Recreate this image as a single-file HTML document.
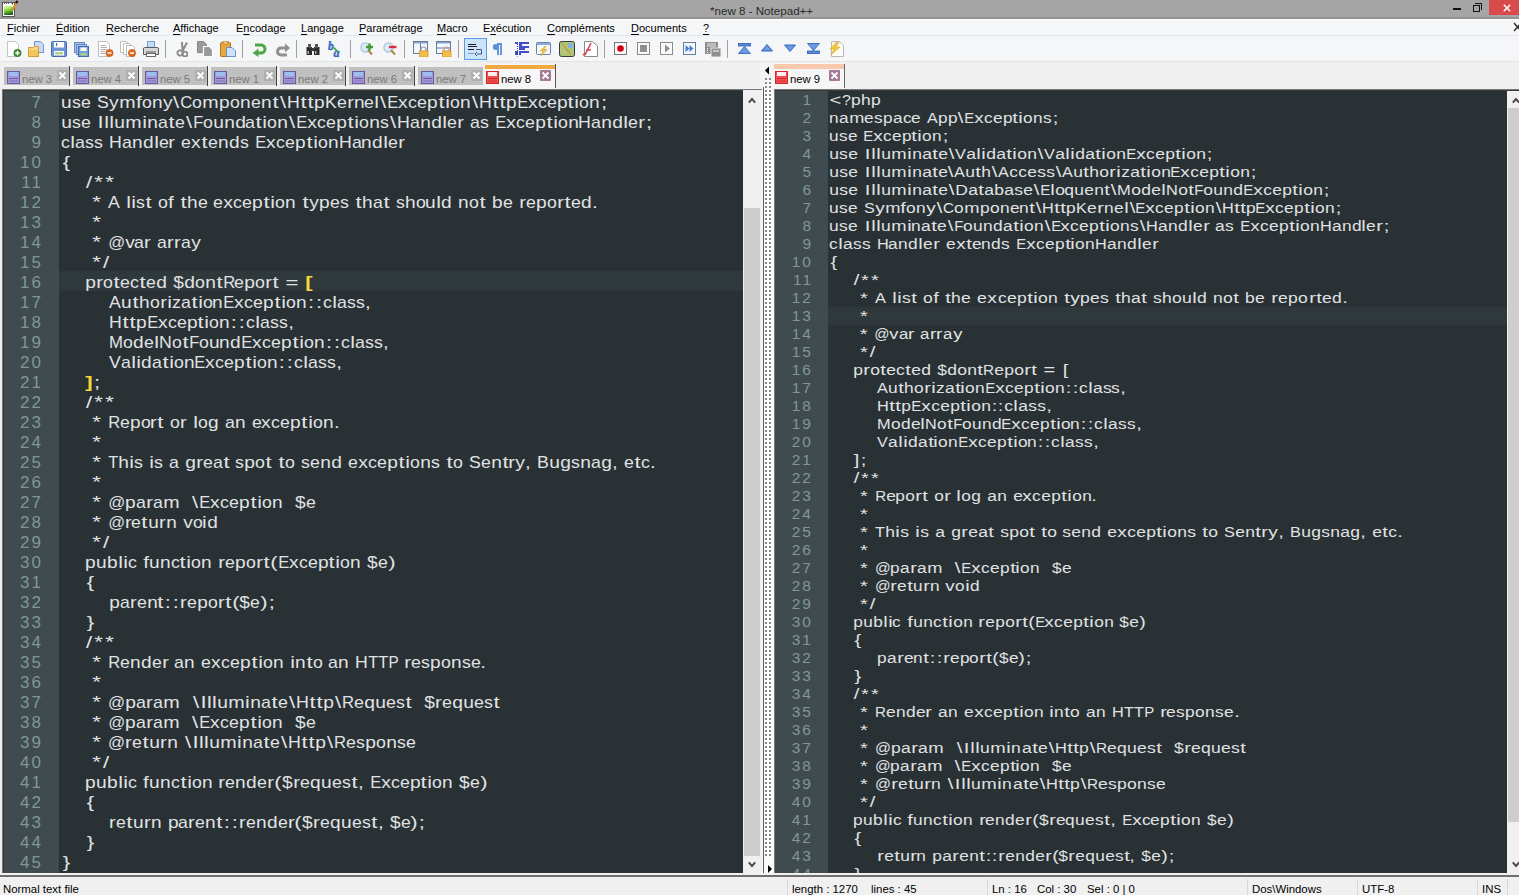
<!DOCTYPE html><html><head><meta charset='utf-8'><style>
*{margin:0;padding:0;box-sizing:border-box}
html,body{width:1519px;height:895px;overflow:hidden;background:#f0f0f0;font-family:"Liberation Sans", sans-serif}
.a{position:absolute}
.ln{position:absolute;white-space:pre;color:#e0e2e4;width:100%}
.ln i{position:absolute;top:0;text-align:center;font-style:normal}
.num{position:absolute;text-align:right;white-space:pre;color:#81969a;letter-spacing:2px}
.mi{position:absolute;top:22px;font-size:11px;color:#000;white-space:pre}
.mi u{text-decoration:underline;text-underline-offset:1.5px;text-decoration-thickness:1px}
.ic{position:absolute;top:41px;width:16px;height:16px}
.sep{position:absolute;top:40px;width:1px;height:18px;background:#a0a0a0}
.tab{position:absolute;top:66px;height:19px;background:#c0c0c0}
.tabt{position:absolute;top:3px;font-size:12.4px;color:#808080;white-space:pre}
.st{position:absolute;top:883.3px;font-size:11.4px;color:#000;white-space:pre}
.ssep{position:absolute;top:879px;width:1px;height:16px;background:#d7d7d7}
</style></head><body><div class="a" style="left:0;top:0;width:1519px;height:19px;background:#a5a5a5"></div><div class="a" style="left:0;top:17px;width:1519px;height:2px;background:#939393"></div><svg class="a" style="left:0;top:0" width="20" height="18" viewBox="0 0 20 18"><defs><linearGradient id="gg" x1="0" y1="0" x2="0.3" y2="1"><stop offset="0" stop-color="#f6ffe0"/><stop offset="0.45" stop-color="#9be040"/><stop offset="1" stop-color="#1e6a18"/></linearGradient></defs><rect x="2.5" y="2.5" width="12" height="14" fill="#fff" stroke="#555" stroke-width="1"/><rect x="4" y="6" width="9" height="9" fill="url(#gg)"/><path d="M4.5 1.5 V4 M6.5 1.5 V4 M8.5 1.5 V4" stroke="#666" stroke-width="1"/><path d="M11 3 L13 3 L13 5 Z" fill="#444"/><path d="M17.2 1.8 L12 10.5" stroke="#d8902a" stroke-width="2.2"/><path d="M17.5 0.8 L16 3.2" stroke="#2a1020" stroke-width="2.4"/></svg><div class="a" style="left:710px;top:3.5px;font-size:11.6px;color:#2a2a2a;white-space:pre">*new 8 - Notepad++</div><div class="a" style="left:1453px;top:8px;width:8px;height:2px;background:#111"></div><div class="a" style="left:1473px;top:5px;width:7px;height:7px;border:1px solid #111"></div><div class="a" style="left:1475px;top:3px;width:7px;height:7px;border-top:1px solid #111;border-right:1px solid #111"></div><div class="a" style="left:1489px;top:0;width:30px;height:15px;background:#d94a4a"></div><svg class="a" style="left:1503px;top:4px" width="8" height="8" viewBox="0 0 8 8"><path d="M0.8 0.8 L7.2 7.2 M7.2 0.8 L0.8 7.2" stroke="#fff" stroke-width="1.5"/></svg><div class="a" style="left:0;top:19px;width:1519px;height:17px;background:#f5f6f7"></div><div class="a" style="left:0;top:19px;width:1519px;height:1px;background:#fdfdfd"></div><div class="a" style="left:0;top:35px;width:1519px;height:1px;background:#e6e7e8"></div><div class="mi" style="left:7px"><u>F</u>ichier</div><div class="mi" style="left:56px"><u>É</u>dition</div><div class="mi" style="left:106px"><u>R</u>echerche</div><div class="mi" style="left:173px"><u>A</u>ffichage</div><div class="mi" style="left:236px">E<u>n</u>codage</div><div class="mi" style="left:301px"><u>L</u>angage</div><div class="mi" style="left:359px"><u>P</u>aramétrage</div><div class="mi" style="left:437px"><u>M</u>acro</div><div class="mi" style="left:483px">E<u>x</u>écution</div><div class="mi" style="left:547px"><u>C</u>ompléments</div><div class="mi" style="left:631px"><u>D</u>ocuments</div><div class="mi" style="left:703px"><u>?</u></div><svg class="a" style="left:1513px;top:22px" width="8" height="10" viewBox="0 0 8 10"><path d="M1 1 L8 9 M8 1 L1 9" stroke="#222" stroke-width="1.3"/></svg><div class="a" style="left:0;top:36px;width:1519px;height:26px;background:#f5f6f7"></div><div class="a" style="left:0;top:61px;width:1519px;height:1px;background:#e3e4e5"></div><svg class="a" style="left:6px;top:41px" width="16" height="16" viewBox="0 0 16 16"><path d="M1.5 0.5 H9.5 L12.5 3.5 V15.5 H1.5 Z" fill="#fff" stroke="#c4c4c4"/><circle cx="11.5" cy="12" r="3.7" fill="#3f8f35" stroke="#2a6a25" stroke-width="0.6"/><path d="M11.5 9.8 V14.2 M9.3 12 H13.7" stroke="#fff" stroke-width="1.3"/></svg><svg class="a" style="left:28px;top:41px" width="16" height="16" viewBox="0 0 16 16"><path d="M6.5 0.5 H12.5 L15.5 3.5 V11.5 H6.5 Z" fill="#c8dcf8" stroke="#7094cc"/><path d="M0.5 6.5 H5 L6 5.5 H10.5 V15.5 H0.5 Z" fill="#f7d77c" stroke="#d09a3a"/><rect x="1" y="9" width="9" height="6" fill="#f3c65a"/></svg><svg class="a" style="left:51px;top:41px" width="16" height="16" viewBox="0 0 16 16"><rect x="0.5" y="0.5" width="15" height="15" rx="1" fill="#7094d4" stroke="#4a6ab0"/><rect x="3" y="1" width="10" height="5.5" fill="#fff"/><rect x="5" y="2" width="1.2" height="3" fill="#4a6ab0"/><rect x="3" y="10" width="10" height="4.5" fill="#fff"/><rect x="4" y="11" width="8" height="2.5" fill="#a8d488"/></svg><svg class="a" style="left:74px;top:41px" width="16" height="16" viewBox="0 0 16 16"><rect x="0.5" y="1.5" width="10" height="10" fill="#a8c0ea" stroke="#6a88c8"/><rect x="2.5" y="3.5" width="10" height="10" fill="#a8c0ea" stroke="#6a88c8"/><rect x="4.5" y="5.5" width="10" height="10" fill="#7c9cd8" stroke="#4a6ab0"/><rect x="6.5" y="6.5" width="6" height="3.5" fill="#fff"/><rect x="6.5" y="12" width="6" height="2.5" fill="#a8d488"/></svg><svg class="a" style="left:98px;top:41px" width="16" height="16" viewBox="0 0 16 16"><path d="M0.5 0.5 H8.5 L11.5 3.5 V15.5 H0.5 Z" fill="#fff" stroke="#bdbdbd"/><path d="M2.5 4.5 H8 M2.5 6.5 H9 M2.5 8.5 H9 M2.5 10.5 H7 M2.5 12.5 H7" stroke="#9a9a9a" stroke-width="0.8"/><circle cx="11.5" cy="12" r="3.6" fill="#e06a1e" stroke="#b04a10" stroke-width="0.6"/><path d="M9.5 12 H13.5" stroke="#fff" stroke-width="1.4"/></svg><svg class="a" style="left:120px;top:41px" width="16" height="16" viewBox="0 0 16 16"><path d="M0.5 0.5 H6.5 L8.5 2.5 V11.5 H0.5 Z" fill="#fff" stroke="#bdbdbd"/><path d="M3.5 2.5 H9.5 L11.5 4.5 V13.5 H3.5 Z" fill="#fff" stroke="#bdbdbd"/><path d="M6.5 4.5 H12.5 L14.5 6.5 V15.5 H6.5 Z" fill="#fff" stroke="#bdbdbd"/><circle cx="12" cy="12" r="3.6" fill="#e06a1e" stroke="#b04a10" stroke-width="0.6"/><path d="M10 12 H14" stroke="#fff" stroke-width="1.4"/></svg><svg class="a" style="left:143px;top:41px" width="16" height="16" viewBox="0 0 16 16"><rect x="4.5" y="0.5" width="7" height="6" fill="#bfdcfa" stroke="#7a9ac8"/><path d="M1.5 6.5 H14.5 Q15.5 6.5 15.5 8 V13.5 H0.5 V8 Q0.5 6.5 1.5 6.5 Z" fill="#d8d8d8" stroke="#5a5a5a"/><rect x="3" y="10" width="10" height="2" fill="#9a9a9a"/><rect x="3.5" y="12.5" width="9" height="3" fill="#fff" stroke="#6a6a6a"/></svg><svg class="a" style="left:176px;top:41px" width="12" height="16" viewBox="0 0 12 16"><path d="M6 1 L6.5 9 M11 1.5 L6.5 10" stroke="#8a8a8a" stroke-width="2"/><circle cx="4" cy="12" r="2.6" fill="none" stroke="#8a8a8a" stroke-width="1.8"/><circle cx="9" cy="13" r="2.4" fill="none" stroke="#8a8a8a" stroke-width="1.8"/></svg><svg class="a" style="left:197px;top:41px" width="16" height="16" viewBox="0 0 16 16"><path d="M0.5 0.5 H6.5 L9.5 3.5 V11.5 H0.5 Z" fill="#9a9a9a" stroke="#888"/><path d="M6.5 5.5 H12.5 L15.5 8.5 V15.5 H6.5 Z" fill="#9a9a9a" stroke="#fff" stroke-width="1.2"/></svg><svg class="a" style="left:220px;top:41px" width="16" height="16" viewBox="0 0 16 16"><rect x="0.5" y="1.5" width="10" height="14" rx="1" fill="#e8a840" stroke="#b07020"/><rect x="3" y="0.5" width="5" height="2.5" fill="#f5d58a" stroke="#b07020" stroke-width="0.6"/><path d="M6.5 6.5 H12 L15.5 10 V15.5 H6.5 Z" fill="#cfe2fb" stroke="#6a90c8"/></svg><svg class="a" style="left:252px;top:42px" width="15" height="15" viewBox="0 0 15 15"><path d="M3 3 H9 A4 4 0 0 1 9 11 H6" fill="none" stroke="#4fa64a" stroke-width="3"/><path d="M0.5 11 L6.5 6.5 V15 Z" fill="#4fa64a"/></svg><svg class="a" style="left:275px;top:42px" width="15" height="15" viewBox="0 0 15 15"><path d="M13 6 H6 A3.5 3.5 0 0 0 6 13 H12" fill="none" stroke="#8f8f8f" stroke-width="3"/><path d="M15 6 L10 1.5 V10.5 Z" fill="#8f8f8f"/></svg><svg class="a" style="left:306px;top:43px" width="14" height="12" viewBox="0 0 14 12"><rect x="0.5" y="4" width="5.5" height="8" fill="#2a2a2a"/><rect x="8" y="4" width="5.5" height="8" fill="#2a2a2a"/><rect x="2" y="1" width="3" height="4" fill="#555"/><rect x="9" y="1" width="3" height="4" fill="#555"/><rect x="5" y="5" width="4" height="3" fill="#3a3a3a"/><rect x="1.5" y="8" width="1.5" height="3" fill="#aaa"/><rect x="9" y="8" width="1.5" height="3" fill="#aaa"/></svg><svg class="a" style="left:328px;top:41px" width="16" height="16" viewBox="0 0 16 16"><text x="0" y="9" font-family="Liberation Serif" font-style="italic" font-weight="bold" font-size="11.5" fill="#3f74d0" stroke="#2a5ab8" stroke-width="0.4">b</text><text x="5.5" y="16" font-family="Liberation Serif" font-style="italic" font-weight="bold" font-size="12" fill="#3f74d0" stroke="#2a5ab8" stroke-width="0.4">a</text><path d="M5.5 6.5 L9.5 10.5" stroke="#4ab04a" stroke-width="1.8"/></svg><svg class="a" style="left:360px;top:42px" width="14" height="14" viewBox="0 0 14 14"><circle cx="5.5" cy="5.5" r="4.6" fill="#dceaf7" stroke="#a8c4dc" stroke-width="1.2"/><path d="M8 8 L12 12.5" stroke="#b08a50" stroke-width="2.2"/><path d="M9.5 1.5 V8.5 M6 5 H13" stroke="#3f9a3a" stroke-width="2.4"/></svg><svg class="a" style="left:383px;top:42px" width="14" height="14" viewBox="0 0 14 14"><circle cx="5.5" cy="5.5" r="4.6" fill="#dceaf7" stroke="#a8c4dc" stroke-width="1.2"/><path d="M8 8 L12 12.5" stroke="#b08a50" stroke-width="2.2"/><path d="M6 5 H13.5" stroke="#d8303a" stroke-width="2.4"/></svg><svg class="a" style="left:413px;top:41px" width="16" height="16" viewBox="0 0 16 16"><rect x="0.5" y="0.5" width="14" height="12" fill="#f0f7ff" stroke="#6a7a95"/><rect x="1" y="1" width="13" height="1.5" fill="#8aa6d0"/><path d="M7.5 2 V12.5" stroke="#6a7a95"/><path d="M8 10 V8.5 A2.5 2.5 0 0 1 13 8.5 V10" fill="none" stroke="#999" stroke-width="1.2"/><rect x="6.5" y="10" width="8.5" height="6" fill="#f2c04a" stroke="#d89a20" stroke-width="0.8"/></svg><svg class="a" style="left:436px;top:41px" width="16" height="16" viewBox="0 0 16 16"><rect x="0.5" y="0.5" width="14" height="12" fill="#f0f7ff" stroke="#6a7a95"/><rect x="1" y="1" width="13" height="1.5" fill="#8aa6d0"/><path d="M1 7 H14" stroke="#6a7a95"/><path d="M8 10 V8.5 A2.5 2.5 0 0 1 13 8.5 V10" fill="none" stroke="#c99" stroke-width="1.2"/><rect x="6.5" y="10" width="8.5" height="6" fill="#f2c04a" stroke="#d89a20" stroke-width="0.8"/></svg><div class="a" style="left:464px;top:38px;width:23px;height:22px;background:#cce4f7;border:1px solid #5a9ae0"></div><svg class="a" style="left:467px;top:42px" width="16" height="16" viewBox="0 0 16 16"><path d="M1 2.5 H9 M1 4.5 H10 M1 7.5 H7" stroke="#1a1a2a" stroke-width="1.2"/><path d="M9 7.5 H14.5 V12 H10" fill="none" stroke="#3a5a90" stroke-width="1"/><path d="M10 10 L8 12 L10 14" fill="none" stroke="#3a5a90"/><path d="M1 11.5 H7" stroke="#7a9ac8" stroke-width="1"/></svg><svg class="a" style="left:492px;top:43px" width="11" height="13" viewBox="0 0 11 13"><path d="M5 1 H10 M6 1 V12 M9 1 V12" stroke="#5a90d8" stroke-width="1.8"/><circle cx="3.8" cy="4" r="3" fill="#5a90d8"/></svg><svg class="a" style="left:515px;top:42px" width="15" height="15" viewBox="0 0 15 15"><path d="M0 1 H3 M4 1 H14 M4 3 H7 M4 5 H14 M4 7 H10 M0 10 H3 M4 10 H14 M0 12 H3 M4 12 H6" stroke="#0a18b8" stroke-width="1.3"/><path d="M2.5 2 V14.5" stroke="#0a18b8" stroke-width="0.8" stroke-dasharray="1 1"/></svg><svg class="a" style="left:536px;top:42px" width="15" height="15" viewBox="0 0 15 15"><rect x="0.5" y="0.5" width="14" height="12" rx="1" fill="#f4f8fc" stroke="#6a80a0"/><rect x="1" y="1" width="13" height="2" fill="#8aaee0"/><path d="M9 4 L4 9 H7 L5 14 L11 7.5 H8 L10 4 Z" fill="#ecc640" stroke="#c8a030" stroke-width="0.5"/></svg><svg class="a" style="left:559px;top:41px" width="16" height="16" viewBox="0 0 16 16"><rect x="0.5" y="0.5" width="15" height="15" rx="2" fill="#a8c878" stroke="#3a3a3a"/><rect x="9" y="2" width="5" height="5" fill="#8ab0e0"/><path d="M3 2 L12 14" stroke="#c8a040" stroke-width="1.5"/><path d="M1 9 Q6 8 8 15" fill="#d8c080" stroke="none" opacity="0.7"/></svg><svg class="a" style="left:582px;top:41px" width="16" height="16" viewBox="0 0 16 16"><path d="M2.5 0.5 H10.5 L15.5 5 V15.5 H2.5 Z" fill="#fff" stroke="#8a8a8a"/><path d="M9 2 L3 14 M1 14 L4 12 M4 9 H9" stroke="#e04050" stroke-width="1.6"/></svg><svg class="a" style="left:614px;top:42px" width="13" height="13" viewBox="0 0 13 13"><rect x="0.5" y="0.5" width="12" height="12" fill="#fafafa" stroke="#777"/><circle cx="6.5" cy="6.5" r="3.3" fill="#d00010"/></svg><svg class="a" style="left:637px;top:42px" width="13" height="13" viewBox="0 0 13 13"><rect x="0.5" y="0.5" width="12" height="12" fill="#fafafa" stroke="#8a8a8a"/><rect x="3" y="3" width="7" height="7" fill="#8f8f8f"/></svg><svg class="a" style="left:660px;top:42px" width="13" height="13" viewBox="0 0 13 13"><rect x="0.5" y="0.5" width="12" height="12" fill="#fafafa" stroke="#8a8a8a"/><path d="M5 2.5 L10 6.5 L5 10.5 Z" fill="#8f8f8f"/></svg><svg class="a" style="left:683px;top:42px" width="13" height="13" viewBox="0 0 13 13"><rect x="0.5" y="0.5" width="12" height="12" fill="#f4f8ff" stroke="#6a7a95"/><path d="M2.5 3 L6.5 6.5 L2.5 10 Z M6.5 3 L10.5 6.5 L6.5 10 Z" fill="#4a7ad8"/></svg><svg class="a" style="left:705px;top:41px" width="16" height="16" viewBox="0 0 16 16"><rect x="0" y="1" width="13" height="12" fill="#8f8f8f"/><path d="M2 3 H11 M2 5 H11" stroke="#fff" stroke-width="0.8"/><path d="M2 7.5 H3 M2 9.5 H3 M2 11.5 H3" stroke="#fff" stroke-width="1"/><rect x="6" y="7" width="10" height="9" fill="#8f8f8f" stroke="#fff" stroke-width="0.8"/><path d="M8 10 H14" stroke="#fff"/></svg><svg class="a" style="left:738px;top:43px" width="13" height="11" viewBox="0 0 13 11"><rect x="0.5" y="0.5" width="12" height="2.5" fill="#5a8ae0" stroke="#2a5ab0" stroke-width="0.8"/><path d="M6.5 3.5 L0.5 10.5 H12.5 Z" fill="#6a9ae6" stroke="#2a5ab0" stroke-width="0.8"/><rect x="0.5" y="10.5" width="12" height="0.1" fill="#2a5ab0"/></svg><svg class="a" style="left:761px;top:44px" width="12" height="8" viewBox="0 0 12 8"><path d="M6 0.5 L0.5 7 H11.5 Z" fill="#6a9ae6" stroke="#2a5ab0" stroke-width="0.9"/></svg><svg class="a" style="left:784px;top:44px" width="12" height="8" viewBox="0 0 12 8"><path d="M6 7.5 L0.5 1 H11.5 Z" fill="#6a9ae6" stroke="#2a5ab0" stroke-width="0.9"/></svg><svg class="a" style="left:807px;top:43px" width="13" height="11" viewBox="0 0 13 11"><path d="M6.5 7.5 L0.5 0.5 H12.5 Z" fill="#6a9ae6" stroke="#2a5ab0" stroke-width="0.8"/><rect x="0.5" y="8" width="12" height="2.5" fill="#5a8ae0" stroke="#2a5ab0" stroke-width="0.8"/></svg><svg class="a" style="left:828px;top:41px" width="16" height="16" viewBox="0 0 16 16"><path d="M3.5 0.5 H11.5 L15.5 4.5 V15.5 H3.5 Z" fill="#fdfdf5" stroke="#b8b8b8"/><path d="M8 1.5 L2 8 H6 L3 14 L12 6 H8 L11 1.5 Z" fill="#f0c838" stroke="#d0a020" stroke-width="0.5"/></svg><div class="sep" style="left:165px"></div><div class="sep" style="left:242px"></div><div class="sep" style="left:296px"></div><div class="sep" style="left:350px"></div><div class="sep" style="left:404px"></div><div class="sep" style="left:458px"></div><div class="sep" style="left:604px"></div><div class="sep" style="left:727px"></div><div class="a" style="left:0;top:62px;width:1519px;height:27px;background:#f0f0f0"></div><div class="a" style="left:4px;top:67px;width:65px;height:18px;background:#c0c0c0"></div><div class="a" style="left:69px;top:66px;width:1px;height:20px;background:#444"></div><svg class="a" style="left:7px;top:71px" width="13" height="13" viewBox="0 0 13 13"><rect x="0.5" y="0.5" width="12" height="12" fill="#a596d8" stroke="#6a5aa0"/><rect x="2" y="1" width="9" height="4" fill="#9ac0f0"/><rect x="2" y="7" width="9" height="1" fill="#6a5aa0"/><rect x="2" y="9.5" width="9" height="1" fill="#6a5aa0" opacity="0.6"/></svg><div class="a" style="left:22px;top:73px;font-size:11.3px;color:#7a7a7a;white-space:pre">new 3</div><svg class="a" style="left:57px;top:70px" width="11" height="11" viewBox="0 0 11 11"><rect x="0" y="0" width="11" height="11" rx="1" fill="#b0b0b0"/><path d="M2.5 2.5 L8.5 8.5 M8.5 2.5 L2.5 8.5" stroke="#fff" stroke-width="1.8"/></svg><div class="a" style="left:73px;top:67px;width:65px;height:18px;background:#c0c0c0"></div><div class="a" style="left:138px;top:66px;width:1px;height:20px;background:#444"></div><svg class="a" style="left:76px;top:71px" width="13" height="13" viewBox="0 0 13 13"><rect x="0.5" y="0.5" width="12" height="12" fill="#a596d8" stroke="#6a5aa0"/><rect x="2" y="1" width="9" height="4" fill="#9ac0f0"/><rect x="2" y="7" width="9" height="1" fill="#6a5aa0"/><rect x="2" y="9.5" width="9" height="1" fill="#6a5aa0" opacity="0.6"/></svg><div class="a" style="left:91px;top:73px;font-size:11.3px;color:#7a7a7a;white-space:pre">new 4</div><svg class="a" style="left:126px;top:70px" width="11" height="11" viewBox="0 0 11 11"><rect x="0" y="0" width="11" height="11" rx="1" fill="#b0b0b0"/><path d="M2.5 2.5 L8.5 8.5 M8.5 2.5 L2.5 8.5" stroke="#fff" stroke-width="1.8"/></svg><div class="a" style="left:142px;top:67px;width:65px;height:18px;background:#c0c0c0"></div><div class="a" style="left:207px;top:66px;width:1px;height:20px;background:#444"></div><svg class="a" style="left:145px;top:71px" width="13" height="13" viewBox="0 0 13 13"><rect x="0.5" y="0.5" width="12" height="12" fill="#a596d8" stroke="#6a5aa0"/><rect x="2" y="1" width="9" height="4" fill="#9ac0f0"/><rect x="2" y="7" width="9" height="1" fill="#6a5aa0"/><rect x="2" y="9.5" width="9" height="1" fill="#6a5aa0" opacity="0.6"/></svg><div class="a" style="left:160px;top:73px;font-size:11.3px;color:#7a7a7a;white-space:pre">new 5</div><svg class="a" style="left:195px;top:70px" width="11" height="11" viewBox="0 0 11 11"><rect x="0" y="0" width="11" height="11" rx="1" fill="#b0b0b0"/><path d="M2.5 2.5 L8.5 8.5 M8.5 2.5 L2.5 8.5" stroke="#fff" stroke-width="1.8"/></svg><div class="a" style="left:211px;top:67px;width:65px;height:18px;background:#c0c0c0"></div><div class="a" style="left:276px;top:66px;width:1px;height:20px;background:#444"></div><svg class="a" style="left:214px;top:71px" width="13" height="13" viewBox="0 0 13 13"><rect x="0.5" y="0.5" width="12" height="12" fill="#a596d8" stroke="#6a5aa0"/><rect x="2" y="1" width="9" height="4" fill="#9ac0f0"/><rect x="2" y="7" width="9" height="1" fill="#6a5aa0"/><rect x="2" y="9.5" width="9" height="1" fill="#6a5aa0" opacity="0.6"/></svg><div class="a" style="left:229px;top:73px;font-size:11.3px;color:#7a7a7a;white-space:pre">new 1</div><svg class="a" style="left:264px;top:70px" width="11" height="11" viewBox="0 0 11 11"><rect x="0" y="0" width="11" height="11" rx="1" fill="#b0b0b0"/><path d="M2.5 2.5 L8.5 8.5 M8.5 2.5 L2.5 8.5" stroke="#fff" stroke-width="1.8"/></svg><div class="a" style="left:280px;top:67px;width:65px;height:18px;background:#c0c0c0"></div><div class="a" style="left:345px;top:66px;width:1px;height:20px;background:#444"></div><svg class="a" style="left:283px;top:71px" width="13" height="13" viewBox="0 0 13 13"><rect x="0.5" y="0.5" width="12" height="12" fill="#a596d8" stroke="#6a5aa0"/><rect x="2" y="1" width="9" height="4" fill="#9ac0f0"/><rect x="2" y="7" width="9" height="1" fill="#6a5aa0"/><rect x="2" y="9.5" width="9" height="1" fill="#6a5aa0" opacity="0.6"/></svg><div class="a" style="left:298px;top:73px;font-size:11.3px;color:#7a7a7a;white-space:pre">new 2</div><svg class="a" style="left:333px;top:70px" width="11" height="11" viewBox="0 0 11 11"><rect x="0" y="0" width="11" height="11" rx="1" fill="#b0b0b0"/><path d="M2.5 2.5 L8.5 8.5 M8.5 2.5 L2.5 8.5" stroke="#fff" stroke-width="1.8"/></svg><div class="a" style="left:349px;top:67px;width:65px;height:18px;background:#c0c0c0"></div><div class="a" style="left:414px;top:66px;width:1px;height:20px;background:#444"></div><svg class="a" style="left:352px;top:71px" width="13" height="13" viewBox="0 0 13 13"><rect x="0.5" y="0.5" width="12" height="12" fill="#a596d8" stroke="#6a5aa0"/><rect x="2" y="1" width="9" height="4" fill="#9ac0f0"/><rect x="2" y="7" width="9" height="1" fill="#6a5aa0"/><rect x="2" y="9.5" width="9" height="1" fill="#6a5aa0" opacity="0.6"/></svg><div class="a" style="left:367px;top:73px;font-size:11.3px;color:#7a7a7a;white-space:pre">new 6</div><svg class="a" style="left:402px;top:70px" width="11" height="11" viewBox="0 0 11 11"><rect x="0" y="0" width="11" height="11" rx="1" fill="#b0b0b0"/><path d="M2.5 2.5 L8.5 8.5 M8.5 2.5 L2.5 8.5" stroke="#fff" stroke-width="1.8"/></svg><div class="a" style="left:418px;top:67px;width:65px;height:18px;background:#c0c0c0"></div><svg class="a" style="left:421px;top:71px" width="13" height="13" viewBox="0 0 13 13"><rect x="0.5" y="0.5" width="12" height="12" fill="#a596d8" stroke="#6a5aa0"/><rect x="2" y="1" width="9" height="4" fill="#9ac0f0"/><rect x="2" y="7" width="9" height="1" fill="#6a5aa0"/><rect x="2" y="9.5" width="9" height="1" fill="#6a5aa0" opacity="0.6"/></svg><div class="a" style="left:436px;top:73px;font-size:11.3px;color:#7a7a7a;white-space:pre">new 7</div><svg class="a" style="left:471px;top:70px" width="11" height="11" viewBox="0 0 11 11"><rect x="0" y="0" width="11" height="11" rx="1" fill="#b0b0b0"/><path d="M2.5 2.5 L8.5 8.5 M8.5 2.5 L2.5 8.5" stroke="#fff" stroke-width="1.8"/></svg><div class="a" style="left:485px;top:64px;width:70px;height:25px;background:#f6f6f6"></div><div class="a" style="left:485px;top:65px;width:70px;height:4px;background:#f0a840"></div><div class="a" style="left:555px;top:64px;width:1px;height:24px;background:#555"></div><svg class="a" style="left:486px;top:71px" width="13" height="13" viewBox="0 0 13 13"><rect x="0.5" y="0.5" width="12" height="12" fill="#f05050" stroke="#d02828"/><rect x="2" y="1" width="9" height="4" fill="#fff0f0"/><rect x="2" y="7" width="9" height="1" fill="#d02828"/><rect x="2" y="9.5" width="9" height="1" fill="#d02828" opacity="0.6"/></svg><div class="a" style="left:501px;top:72.5px;font-size:11.3px;color:#000;white-space:pre">new 8</div><svg class="a" style="left:540px;top:70px" width="11" height="11" viewBox="0 0 11 11"><rect x="0" y="0" width="11" height="11" rx="1" fill="#a57a95"/><path d="M2.5 2.5 L8.5 8.5 M8.5 2.5 L2.5 8.5" stroke="#fff" stroke-width="1.8"/></svg><div class="a" style="left:774px;top:63px;width:70px;height:26px;background:#f6f6f6"></div><div class="a" style="left:774px;top:64px;width:70px;height:5px;background:#fac8ad"></div><div class="a" style="left:844px;top:64px;width:1px;height:24px;background:#666"></div><svg class="a" style="left:775px;top:71px" width="13" height="13" viewBox="0 0 13 13"><rect x="0.5" y="0.5" width="12" height="12" fill="#f05050" stroke="#d02828"/><rect x="2" y="1" width="9" height="4" fill="#fff0f0"/><rect x="2" y="7" width="9" height="1" fill="#d02828"/><rect x="2" y="9.5" width="9" height="1" fill="#d02828" opacity="0.6"/></svg><div class="a" style="left:790px;top:72.5px;font-size:11.3px;color:#000;white-space:pre">new 9</div><svg class="a" style="left:829px;top:70px" width="11" height="11" viewBox="0 0 11 11"><rect x="0" y="0" width="11" height="11" rx="1" fill="#a57a95"/><path d="M2.5 2.5 L8.5 8.5 M8.5 2.5 L2.5 8.5" stroke="#fff" stroke-width="1.8"/></svg><div class="a" style="left:2px;top:89px;width:761px;height:1px;background:#787878"></div><div class="a" style="left:2px;top:89px;width:1px;height:784px;background:#787878"></div><div class="a" style="left:3px;top:90px;width:740px;height:1px;background:#353b3d"></div><div class="a" style="left:3px;top:90px;width:1px;height:783px;background:#353b3d"></div><div class="a" style="left:760px;top:63px;width:14px;height:24px;background:#f4f4f4"></div><div class="a" style="left:762px;top:87px;width:12px;height:788px;background:#fbfbfb"></div><div class="a" style="left:763px;top:87px;width:1px;height:788px;background:#5c5c5c"></div><div class="a" style="left:774px;top:89px;width:745px;height:1px;background:#787878"></div><div class="a" style="left:774px;top:89px;width:1px;height:784px;background:#787878"></div><div class="a" style="left:775px;top:90px;width:744px;height:1px;background:#353b3d"></div><div class="a" style="left:765px;top:78px;width:6px;height:780px;background-image:linear-gradient(transparent 2px, #fbfbfb 2px),linear-gradient(90deg,#8a8a8a 2px, transparent 2px);background-size:4px 4px,4px 4px"></div><svg class="a" style="left:764px;top:66px" width="6" height="9" viewBox="0 0 6 9"><path d="M5 0.5 L1 4.5 L5 8.5 Z" fill="#000"/></svg><svg class="a" style="left:767px;top:864px" width="6" height="10" viewBox="0 0 6 10"><path d="M1 1 L5 5 L1 9 Z" fill="#000"/></svg><div class="a" style="left:4px;top:91px;width:739px;height:782px;background:#293134;overflow:hidden"><div class="a" style="left:0;top:0;width:55px;height:782px;background:#3f4b4e"></div><div class="a" style="left:55px;top:180px;width:739px;height:20px;background:#2f393c"></div><div class="num" style="left:0;width:39px;top:2px;font-size:17px;line-height:20px">7</div><div class="ln" style="left:0;top:2px;font-size:17px;line-height:20px"><i style="left:57.0px;width:10.9px;transform:scaleX(1.126)">u</i><i style="left:67.9px;width:9.0px;transform:scaleX(1.043)">s</i><i style="left:76.9px;width:9.9px;transform:scaleX(1.042)">e</i><i style="left:92.8px;width:11.9px;transform:scaleX(1.042)">S</i><i style="left:104.8px;width:9.9px;transform:scaleX(1.136)">y</i><i style="left:114.7px;width:16.9px;transform:scaleX(1.155)">m</i><i style="left:131.6px;width:6.0px;transform:scaleX(1.211)">f</i><i style="left:137.6px;width:9.9px;transform:scaleX(1.042)">o</i><i style="left:147.5px;width:10.9px;transform:scaleX(1.126)">n</i><i style="left:158.5px;width:9.9px;transform:scaleX(1.136)">y</i><i style="left:168.4px;width:8.0px;transform:scaleX(1.300)">\</i><i style="left:176.4px;width:11.9px;transform:scaleX(0.978)">C</i><i style="left:188.3px;width:9.9px;transform:scaleX(1.042)">o</i><i style="left:198.3px;width:16.9px;transform:scaleX(1.155)">m</i><i style="left:215.2px;width:10.9px;transform:scaleX(1.126)">p</i><i style="left:226.1px;width:9.9px;transform:scaleX(1.042)">o</i><i style="left:236.1px;width:10.9px;transform:scaleX(1.126)">n</i><i style="left:247.0px;width:9.9px;transform:scaleX(1.042)">e</i><i style="left:257.0px;width:10.9px;transform:scaleX(1.126)">n</i><i style="left:267.9px;width:7.0px;transform:scaleX(1.300)">t</i><i style="left:274.9px;width:8.0px;transform:scaleX(1.300)">\</i><i style="left:282.8px;width:12.9px;transform:scaleX(1.043)">H</i><i style="left:295.8px;width:7.0px;transform:scaleX(1.300)">t</i><i style="left:302.7px;width:7.0px;transform:scaleX(1.300)">t</i><i style="left:309.7px;width:10.9px;transform:scaleX(1.126)">p</i><i style="left:320.7px;width:11.9px;transform:scaleX(1.042)">K</i><i style="left:332.6px;width:9.9px;transform:scaleX(1.042)">e</i><i style="left:342.5px;width:7.0px;transform:scaleX(1.184)">r</i><i style="left:349.5px;width:10.9px;transform:scaleX(1.126)">n</i><i style="left:360.4px;width:9.9px;transform:scaleX(1.042)">e</i><i style="left:370.4px;width:5.0px;transform:scaleX(1.254)">l</i><i style="left:375.4px;width:8.0px;transform:scaleX(1.300)">\</i><i style="left:383.3px;width:10.9px;transform:scaleX(0.972)">E</i><i style="left:394.3px;width:9.9px;transform:scaleX(1.136)">x</i><i style="left:404.2px;width:9.0px;transform:scaleX(1.043)">c</i><i style="left:413.2px;width:9.9px;transform:scaleX(1.042)">e</i><i style="left:423.1px;width:10.9px;transform:scaleX(1.126)">p</i><i style="left:434.1px;width:7.0px;transform:scaleX(1.300)">t</i><i style="left:441.0px;width:5.0px;transform:scaleX(1.254)">i</i><i style="left:446.0px;width:9.9px;transform:scaleX(1.042)">o</i><i style="left:456.0px;width:10.9px;transform:scaleX(1.126)">n</i><i style="left:466.9px;width:8.0px;transform:scaleX(1.300)">\</i><i style="left:474.9px;width:12.9px;transform:scaleX(1.043)">H</i><i style="left:487.8px;width:7.0px;transform:scaleX(1.300)">t</i><i style="left:494.8px;width:7.0px;transform:scaleX(1.300)">t</i><i style="left:501.7px;width:10.9px;transform:scaleX(1.126)">p</i><i style="left:512.7px;width:10.9px;transform:scaleX(0.972)">E</i><i style="left:523.6px;width:9.9px;transform:scaleX(1.136)">x</i><i style="left:533.6px;width:9.0px;transform:scaleX(1.043)">c</i><i style="left:542.5px;width:9.9px;transform:scaleX(1.042)">e</i><i style="left:552.5px;width:10.9px;transform:scaleX(1.126)">p</i><i style="left:563.4px;width:7.0px;transform:scaleX(1.300)">t</i><i style="left:570.4px;width:5.0px;transform:scaleX(1.254)">i</i><i style="left:575.3px;width:9.9px;transform:scaleX(1.042)">o</i><i style="left:585.3px;width:10.9px;transform:scaleX(1.126)">n</i><i style="left:596.2px;width:8.0px;transform:scaleX(1.300)">;</i></div><div class="num" style="left:0;width:39px;top:22px;font-size:17px;line-height:20px">8</div><div class="ln" style="left:0;top:22px;font-size:17px;line-height:20px"><i style="left:57.0px;width:11.0px;transform:scaleX(1.128)">u</i><i style="left:68.0px;width:9.0px;transform:scaleX(1.044)">s</i><i style="left:76.9px;width:10.0px;transform:scaleX(1.044)">e</i><i style="left:92.9px;width:7.0px;transform:scaleX(1.300)">I</i><i style="left:99.9px;width:5.0px;transform:scaleX(1.256)">l</i><i style="left:104.9px;width:5.0px;transform:scaleX(1.256)">l</i><i style="left:109.8px;width:11.0px;transform:scaleX(1.128)">u</i><i style="left:120.8px;width:16.9px;transform:scaleX(1.157)">m</i><i style="left:137.8px;width:5.0px;transform:scaleX(1.256)">i</i><i style="left:142.7px;width:11.0px;transform:scaleX(1.128)">n</i><i style="left:153.7px;width:10.0px;transform:scaleX(1.044)">a</i><i style="left:163.7px;width:7.0px;transform:scaleX(1.300)">t</i><i style="left:170.7px;width:10.0px;transform:scaleX(1.044)">e</i><i style="left:180.6px;width:8.0px;transform:scaleX(1.300)">\</i><i style="left:188.6px;width:10.0px;transform:scaleX(0.968)">F</i><i style="left:198.6px;width:10.0px;transform:scaleX(1.044)">o</i><i style="left:208.5px;width:11.0px;transform:scaleX(1.128)">u</i><i style="left:219.5px;width:11.0px;transform:scaleX(1.128)">n</i><i style="left:230.5px;width:11.0px;transform:scaleX(1.128)">d</i><i style="left:241.4px;width:10.0px;transform:scaleX(1.044)">a</i><i style="left:251.4px;width:7.0px;transform:scaleX(1.300)">t</i><i style="left:258.4px;width:5.0px;transform:scaleX(1.256)">i</i><i style="left:263.4px;width:10.0px;transform:scaleX(1.044)">o</i><i style="left:273.3px;width:11.0px;transform:scaleX(1.128)">n</i><i style="left:284.3px;width:8.0px;transform:scaleX(1.300)">\</i><i style="left:292.3px;width:11.0px;transform:scaleX(0.974)">E</i><i style="left:303.3px;width:10.0px;transform:scaleX(1.138)">x</i><i style="left:313.2px;width:9.0px;transform:scaleX(1.044)">c</i><i style="left:322.2px;width:10.0px;transform:scaleX(1.044)">e</i><i style="left:332.2px;width:11.0px;transform:scaleX(1.128)">p</i><i style="left:343.1px;width:7.0px;transform:scaleX(1.300)">t</i><i style="left:350.1px;width:5.0px;transform:scaleX(1.256)">i</i><i style="left:355.1px;width:10.0px;transform:scaleX(1.044)">o</i><i style="left:365.1px;width:11.0px;transform:scaleX(1.128)">n</i><i style="left:376.0px;width:9.0px;transform:scaleX(1.044)">s</i><i style="left:385.0px;width:8.0px;transform:scaleX(1.300)">\</i><i style="left:393.0px;width:13.0px;transform:scaleX(1.045)">H</i><i style="left:405.9px;width:10.0px;transform:scaleX(1.044)">a</i><i style="left:415.9px;width:11.0px;transform:scaleX(1.128)">n</i><i style="left:426.9px;width:11.0px;transform:scaleX(1.128)">d</i><i style="left:437.8px;width:5.0px;transform:scaleX(1.256)">l</i><i style="left:442.8px;width:10.0px;transform:scaleX(1.044)">e</i><i style="left:452.8px;width:7.0px;transform:scaleX(1.186)">r</i><i style="left:465.8px;width:10.0px;transform:scaleX(1.044)">a</i><i style="left:475.7px;width:9.0px;transform:scaleX(1.044)">s</i><i style="left:490.7px;width:11.0px;transform:scaleX(0.974)">E</i><i style="left:501.6px;width:10.0px;transform:scaleX(1.138)">x</i><i style="left:511.6px;width:9.0px;transform:scaleX(1.044)">c</i><i style="left:520.6px;width:10.0px;transform:scaleX(1.044)">e</i><i style="left:530.6px;width:11.0px;transform:scaleX(1.128)">p</i><i style="left:541.5px;width:7.0px;transform:scaleX(1.300)">t</i><i style="left:548.5px;width:5.0px;transform:scaleX(1.256)">i</i><i style="left:553.5px;width:10.0px;transform:scaleX(1.044)">o</i><i style="left:563.5px;width:11.0px;transform:scaleX(1.128)">n</i><i style="left:574.4px;width:13.0px;transform:scaleX(1.045)">H</i><i style="left:587.4px;width:10.0px;transform:scaleX(1.044)">a</i><i style="left:597.4px;width:11.0px;transform:scaleX(1.128)">n</i><i style="left:608.3px;width:11.0px;transform:scaleX(1.128)">d</i><i style="left:619.3px;width:5.0px;transform:scaleX(1.256)">l</i><i style="left:624.3px;width:10.0px;transform:scaleX(1.044)">e</i><i style="left:634.2px;width:7.0px;transform:scaleX(1.186)">r</i><i style="left:641.2px;width:8.0px;transform:scaleX(1.300)">;</i></div><div class="num" style="left:0;width:39px;top:42px;font-size:17px;line-height:20px">9</div><div class="ln" style="left:0;top:42px;font-size:17px;line-height:20px"><i style="left:57.0px;width:9.0px;transform:scaleX(1.043)">c</i><i style="left:66.0px;width:5.0px;transform:scaleX(1.254)">l</i><i style="left:70.9px;width:9.9px;transform:scaleX(1.042)">a</i><i style="left:80.9px;width:9.0px;transform:scaleX(1.043)">s</i><i style="left:89.8px;width:9.0px;transform:scaleX(1.043)">s</i><i style="left:104.8px;width:12.9px;transform:scaleX(1.043)">H</i><i style="left:117.7px;width:9.9px;transform:scaleX(1.042)">a</i><i style="left:127.6px;width:10.9px;transform:scaleX(1.126)">n</i><i style="left:138.6px;width:10.9px;transform:scaleX(1.126)">d</i><i style="left:149.5px;width:5.0px;transform:scaleX(1.254)">l</i><i style="left:154.5px;width:9.9px;transform:scaleX(1.042)">e</i><i style="left:164.4px;width:7.0px;transform:scaleX(1.184)">r</i><i style="left:177.4px;width:9.9px;transform:scaleX(1.042)">e</i><i style="left:187.3px;width:9.9px;transform:scaleX(1.136)">x</i><i style="left:197.3px;width:7.0px;transform:scaleX(1.300)">t</i><i style="left:204.2px;width:9.9px;transform:scaleX(1.042)">e</i><i style="left:214.2px;width:10.9px;transform:scaleX(1.126)">n</i><i style="left:225.1px;width:10.9px;transform:scaleX(1.126)">d</i><i style="left:236.1px;width:9.0px;transform:scaleX(1.043)">s</i><i style="left:251.0px;width:10.9px;transform:scaleX(0.972)">E</i><i style="left:261.9px;width:9.9px;transform:scaleX(1.136)">x</i><i style="left:271.9px;width:9.0px;transform:scaleX(1.043)">c</i><i style="left:280.8px;width:9.9px;transform:scaleX(1.042)">e</i><i style="left:290.8px;width:10.9px;transform:scaleX(1.126)">p</i><i style="left:301.7px;width:7.0px;transform:scaleX(1.300)">t</i><i style="left:308.7px;width:5.0px;transform:scaleX(1.254)">i</i><i style="left:313.7px;width:9.9px;transform:scaleX(1.042)">o</i><i style="left:323.6px;width:10.9px;transform:scaleX(1.126)">n</i><i style="left:334.5px;width:12.9px;transform:scaleX(1.043)">H</i><i style="left:347.5px;width:9.9px;transform:scaleX(1.042)">a</i><i style="left:357.4px;width:10.9px;transform:scaleX(1.126)">n</i><i style="left:368.4px;width:10.9px;transform:scaleX(1.126)">d</i><i style="left:379.3px;width:5.0px;transform:scaleX(1.254)">l</i><i style="left:384.3px;width:9.9px;transform:scaleX(1.042)">e</i><i style="left:394.2px;width:7.0px;transform:scaleX(1.184)">r</i></div><div class="num" style="left:0;width:39px;top:62px;font-size:17px;line-height:20px">10</div><div class="ln" style="left:0;top:62px;font-size:17px;line-height:20px"><i style="left:57.0px;width:11.0px;transform:scaleX(1.300)">{</i></div><div class="num" style="left:0;width:39px;top:82px;font-size:17px;line-height:20px">11</div><div class="ln" style="left:0;top:82px;font-size:17px;line-height:20px"><i style="left:81.0px;width:8.0px;transform:scaleX(1.300)">/</i><i style="left:89.0px;width:11.0px;transform:scaleX(1.300)">*</i><i style="left:100.0px;width:11.0px;transform:scaleX(1.300)">*</i></div><div class="num" style="left:0;width:39px;top:102px;font-size:17px;line-height:20px">12</div><div class="ln" style="left:0;top:102px;font-size:17px;line-height:20px"><i style="left:87.0px;width:10.9px;transform:scaleX(1.300)">*</i><i style="left:103.9px;width:11.9px;transform:scaleX(1.043)">A</i><i style="left:121.8px;width:5.0px;transform:scaleX(1.254)">l</i><i style="left:126.8px;width:5.0px;transform:scaleX(1.254)">i</i><i style="left:131.8px;width:9.0px;transform:scaleX(1.043)">s</i><i style="left:140.7px;width:7.0px;transform:scaleX(1.300)">t</i><i style="left:153.7px;width:10.0px;transform:scaleX(1.042)">o</i><i style="left:163.6px;width:6.0px;transform:scaleX(1.212)">f</i><i style="left:175.6px;width:7.0px;transform:scaleX(1.300)">t</i><i style="left:182.5px;width:10.9px;transform:scaleX(1.126)">h</i><i style="left:193.5px;width:10.0px;transform:scaleX(1.042)">e</i><i style="left:209.4px;width:10.0px;transform:scaleX(1.042)">e</i><i style="left:219.4px;width:10.0px;transform:scaleX(1.137)">x</i><i style="left:229.3px;width:9.0px;transform:scaleX(1.043)">c</i><i style="left:238.3px;width:10.0px;transform:scaleX(1.042)">e</i><i style="left:248.2px;width:10.9px;transform:scaleX(1.126)">p</i><i style="left:259.2px;width:7.0px;transform:scaleX(1.300)">t</i><i style="left:266.1px;width:5.0px;transform:scaleX(1.254)">i</i><i style="left:271.1px;width:10.0px;transform:scaleX(1.042)">o</i><i style="left:281.1px;width:10.9px;transform:scaleX(1.126)">n</i><i style="left:298.0px;width:7.0px;transform:scaleX(1.300)">t</i><i style="left:305.0px;width:10.0px;transform:scaleX(1.137)">y</i><i style="left:314.9px;width:10.9px;transform:scaleX(1.126)">p</i><i style="left:325.9px;width:10.0px;transform:scaleX(1.042)">e</i><i style="left:335.8px;width:9.0px;transform:scaleX(1.043)">s</i><i style="left:350.7px;width:7.0px;transform:scaleX(1.300)">t</i><i style="left:357.7px;width:10.9px;transform:scaleX(1.126)">h</i><i style="left:368.7px;width:10.0px;transform:scaleX(1.042)">a</i><i style="left:378.6px;width:7.0px;transform:scaleX(1.300)">t</i><i style="left:391.5px;width:9.0px;transform:scaleX(1.043)">s</i><i style="left:400.5px;width:10.9px;transform:scaleX(1.126)">h</i><i style="left:411.5px;width:10.0px;transform:scaleX(1.042)">o</i><i style="left:421.4px;width:10.9px;transform:scaleX(1.126)">u</i><i style="left:432.4px;width:5.0px;transform:scaleX(1.254)">l</i><i style="left:437.3px;width:10.9px;transform:scaleX(1.126)">d</i><i style="left:454.3px;width:10.9px;transform:scaleX(1.126)">n</i><i style="left:465.2px;width:10.0px;transform:scaleX(1.042)">o</i><i style="left:475.2px;width:7.0px;transform:scaleX(1.300)">t</i><i style="left:488.1px;width:10.9px;transform:scaleX(1.126)">b</i><i style="left:499.0px;width:10.0px;transform:scaleX(1.042)">e</i><i style="left:515.0px;width:7.0px;transform:scaleX(1.185)">r</i><i style="left:521.9px;width:10.0px;transform:scaleX(1.042)">e</i><i style="left:531.9px;width:10.9px;transform:scaleX(1.126)">p</i><i style="left:542.8px;width:10.0px;transform:scaleX(1.042)">o</i><i style="left:552.8px;width:7.0px;transform:scaleX(1.185)">r</i><i style="left:559.8px;width:7.0px;transform:scaleX(1.300)">t</i><i style="left:566.7px;width:10.0px;transform:scaleX(1.042)">e</i><i style="left:576.7px;width:10.9px;transform:scaleX(1.126)">d</i><i style="left:587.6px;width:6.0px;transform:scaleX(1.212)">.</i></div><div class="num" style="left:0;width:39px;top:122px;font-size:17px;line-height:20px">13</div><div class="ln" style="left:0;top:122px;font-size:17px;line-height:20px"><i style="left:87.0px;width:11.0px;transform:scaleX(1.300)">*</i></div><div class="num" style="left:0;width:39px;top:142px;font-size:17px;line-height:20px">14</div><div class="ln" style="left:0;top:142px;font-size:17px;line-height:20px"><i style="left:86.9px;width:10.9px;transform:scaleX(1.300)">*</i><i style="left:103.7px;width:16.8px;transform:scaleX(0.978)">@</i><i style="left:120.5px;width:9.9px;transform:scaleX(1.129)">v</i><i style="left:130.4px;width:9.9px;transform:scaleX(1.035)">a</i><i style="left:140.2px;width:6.9px;transform:scaleX(1.176)">r</i><i style="left:153.1px;width:9.9px;transform:scaleX(1.035)">a</i><i style="left:162.9px;width:6.9px;transform:scaleX(1.176)">r</i><i style="left:169.8px;width:6.9px;transform:scaleX(1.176)">r</i><i style="left:176.8px;width:9.9px;transform:scaleX(1.035)">a</i><i style="left:186.6px;width:9.9px;transform:scaleX(1.129)">y</i></div><div class="num" style="left:0;width:39px;top:162px;font-size:17px;line-height:20px">15</div><div class="ln" style="left:0;top:162px;font-size:17px;line-height:20px"><i style="left:87.0px;width:11.0px;transform:scaleX(1.300)">*</i><i style="left:98.0px;width:8.0px;transform:scaleX(1.300)">/</i></div><div class="num" style="left:0;width:39px;top:182px;font-size:17px;line-height:20px">16</div><div class="ln" style="left:0;top:182px;font-size:17px;line-height:20px"><i style="left:81.0px;width:11.0px;transform:scaleX(1.127)">p</i><i style="left:92.0px;width:7.0px;transform:scaleX(1.185)">r</i><i style="left:98.9px;width:10.0px;transform:scaleX(1.043)">o</i><i style="left:108.9px;width:7.0px;transform:scaleX(1.300)">t</i><i style="left:115.9px;width:10.0px;transform:scaleX(1.043)">e</i><i style="left:125.8px;width:9.0px;transform:scaleX(1.044)">c</i><i style="left:134.8px;width:7.0px;transform:scaleX(1.300)">t</i><i style="left:141.8px;width:10.0px;transform:scaleX(1.043)">e</i><i style="left:151.7px;width:11.0px;transform:scaleX(1.127)">d</i><i style="left:168.7px;width:11.0px;transform:scaleX(1.127)">$</i><i style="left:179.6px;width:11.0px;transform:scaleX(1.127)">d</i><i style="left:190.6px;width:10.0px;transform:scaleX(1.043)">o</i><i style="left:200.5px;width:11.0px;transform:scaleX(1.127)">n</i><i style="left:211.5px;width:7.0px;transform:scaleX(1.300)">t</i><i style="left:218.5px;width:12.0px;transform:scaleX(0.979)">R</i><i style="left:230.4px;width:10.0px;transform:scaleX(1.043)">e</i><i style="left:240.4px;width:11.0px;transform:scaleX(1.127)">p</i><i style="left:251.3px;width:10.0px;transform:scaleX(1.043)">o</i><i style="left:261.3px;width:7.0px;transform:scaleX(1.185)">r</i><i style="left:268.3px;width:7.0px;transform:scaleX(1.300)">t</i><i style="left:281.2px;width:13.9px;transform:scaleX(1.300)">=</i><i style="left:301.1px;width:8.0px;transform:scaleX(1.300);color:#f8d838;font-weight:bold">[</i></div><div class="num" style="left:0;width:39px;top:202px;font-size:17px;line-height:20px">17</div><div class="ln" style="left:0;top:202px;font-size:17px;line-height:20px"><i style="left:105.0px;width:11.9px;transform:scaleX(1.042)">A</i><i style="left:116.9px;width:10.9px;transform:scaleX(1.126)">u</i><i style="left:127.9px;width:7.0px;transform:scaleX(1.300)">t</i><i style="left:134.8px;width:10.9px;transform:scaleX(1.126)">h</i><i style="left:145.8px;width:9.9px;transform:scaleX(1.042)">o</i><i style="left:155.7px;width:7.0px;transform:scaleX(1.184)">r</i><i style="left:162.7px;width:5.0px;transform:scaleX(1.253)">i</i><i style="left:167.7px;width:9.0px;transform:scaleX(1.043)">z</i><i style="left:176.6px;width:9.9px;transform:scaleX(1.042)">a</i><i style="left:186.6px;width:7.0px;transform:scaleX(1.300)">t</i><i style="left:193.5px;width:5.0px;transform:scaleX(1.253)">i</i><i style="left:198.5px;width:9.9px;transform:scaleX(1.042)">o</i><i style="left:208.4px;width:10.9px;transform:scaleX(1.126)">n</i><i style="left:219.4px;width:10.9px;transform:scaleX(0.972)">E</i><i style="left:230.3px;width:9.9px;transform:scaleX(1.136)">x</i><i style="left:240.3px;width:9.0px;transform:scaleX(1.043)">c</i><i style="left:249.2px;width:9.9px;transform:scaleX(1.042)">e</i><i style="left:259.2px;width:10.9px;transform:scaleX(1.126)">p</i><i style="left:270.1px;width:7.0px;transform:scaleX(1.300)">t</i><i style="left:277.1px;width:5.0px;transform:scaleX(1.253)">i</i><i style="left:282.1px;width:9.9px;transform:scaleX(1.042)">o</i><i style="left:292.0px;width:10.9px;transform:scaleX(1.126)">n</i><i style="left:302.9px;width:8.0px;transform:scaleX(1.300)">:</i><i style="left:310.9px;width:8.0px;transform:scaleX(1.300)">:</i><i style="left:318.9px;width:9.0px;transform:scaleX(1.043)">c</i><i style="left:327.8px;width:5.0px;transform:scaleX(1.253)">l</i><i style="left:332.8px;width:9.9px;transform:scaleX(1.042)">a</i><i style="left:342.7px;width:9.0px;transform:scaleX(1.043)">s</i><i style="left:351.7px;width:9.0px;transform:scaleX(1.043)">s</i><i style="left:360.6px;width:6.0px;transform:scaleX(1.211)">,</i></div><div class="num" style="left:0;width:39px;top:222px;font-size:17px;line-height:20px">18</div><div class="ln" style="left:0;top:222px;font-size:17px;line-height:20px"><i style="left:105.0px;width:12.9px;transform:scaleX(1.041)">H</i><i style="left:117.9px;width:7.0px;transform:scaleX(1.300)">t</i><i style="left:124.9px;width:7.0px;transform:scaleX(1.300)">t</i><i style="left:131.8px;width:10.9px;transform:scaleX(1.124)">p</i><i style="left:142.7px;width:10.9px;transform:scaleX(0.971)">E</i><i style="left:153.7px;width:9.9px;transform:scaleX(1.135)">x</i><i style="left:163.6px;width:8.9px;transform:scaleX(1.041)">c</i><i style="left:172.5px;width:9.9px;transform:scaleX(1.040)">e</i><i style="left:182.5px;width:10.9px;transform:scaleX(1.124)">p</i><i style="left:193.4px;width:7.0px;transform:scaleX(1.300)">t</i><i style="left:200.3px;width:5.0px;transform:scaleX(1.252)">i</i><i style="left:205.3px;width:9.9px;transform:scaleX(1.040)">o</i><i style="left:215.2px;width:10.9px;transform:scaleX(1.124)">n</i><i style="left:226.1px;width:7.9px;transform:scaleX(1.300)">:</i><i style="left:234.1px;width:7.9px;transform:scaleX(1.300)">:</i><i style="left:242.0px;width:8.9px;transform:scaleX(1.041)">c</i><i style="left:251.0px;width:5.0px;transform:scaleX(1.252)">l</i><i style="left:255.9px;width:9.9px;transform:scaleX(1.040)">a</i><i style="left:265.9px;width:8.9px;transform:scaleX(1.041)">s</i><i style="left:274.8px;width:8.9px;transform:scaleX(1.041)">s</i><i style="left:283.7px;width:6.0px;transform:scaleX(1.209)">,</i></div><div class="num" style="left:0;width:39px;top:242px;font-size:17px;line-height:20px">19</div><div class="ln" style="left:0;top:242px;font-size:17px;line-height:20px"><i style="left:105.0px;width:13.9px;transform:scaleX(0.987)">M</i><i style="left:118.9px;width:9.9px;transform:scaleX(1.042)">o</i><i style="left:128.9px;width:10.9px;transform:scaleX(1.126)">d</i><i style="left:139.8px;width:9.9px;transform:scaleX(1.042)">e</i><i style="left:149.8px;width:5.0px;transform:scaleX(1.253)">l</i><i style="left:154.7px;width:12.9px;transform:scaleX(1.043)">N</i><i style="left:167.7px;width:9.9px;transform:scaleX(1.042)">o</i><i style="left:177.6px;width:7.0px;transform:scaleX(1.300)">t</i><i style="left:184.6px;width:9.9px;transform:scaleX(0.966)">F</i><i style="left:194.5px;width:9.9px;transform:scaleX(1.042)">o</i><i style="left:204.5px;width:10.9px;transform:scaleX(1.126)">u</i><i style="left:215.4px;width:10.9px;transform:scaleX(1.126)">n</i><i style="left:226.3px;width:10.9px;transform:scaleX(1.126)">d</i><i style="left:237.3px;width:10.9px;transform:scaleX(0.972)">E</i><i style="left:248.2px;width:9.9px;transform:scaleX(1.136)">x</i><i style="left:258.2px;width:9.0px;transform:scaleX(1.043)">c</i><i style="left:267.1px;width:9.9px;transform:scaleX(1.042)">e</i><i style="left:277.1px;width:10.9px;transform:scaleX(1.126)">p</i><i style="left:288.0px;width:7.0px;transform:scaleX(1.300)">t</i><i style="left:295.0px;width:5.0px;transform:scaleX(1.253)">i</i><i style="left:300.0px;width:9.9px;transform:scaleX(1.042)">o</i><i style="left:309.9px;width:10.9px;transform:scaleX(1.126)">n</i><i style="left:320.8px;width:8.0px;transform:scaleX(1.300)">:</i><i style="left:328.8px;width:8.0px;transform:scaleX(1.300)">:</i><i style="left:336.8px;width:9.0px;transform:scaleX(1.043)">c</i><i style="left:345.7px;width:5.0px;transform:scaleX(1.253)">l</i><i style="left:350.7px;width:9.9px;transform:scaleX(1.042)">a</i><i style="left:360.6px;width:9.0px;transform:scaleX(1.043)">s</i><i style="left:369.6px;width:9.0px;transform:scaleX(1.043)">s</i><i style="left:378.5px;width:6.0px;transform:scaleX(1.211)">,</i></div><div class="num" style="left:0;width:39px;top:262px;font-size:17px;line-height:20px">20</div><div class="ln" style="left:0;top:262px;font-size:17px;line-height:20px"><i style="left:105.0px;width:11.9px;transform:scaleX(1.041)">V</i><i style="left:116.9px;width:9.9px;transform:scaleX(1.041)">a</i><i style="left:126.9px;width:5.0px;transform:scaleX(1.252)">l</i><i style="left:131.8px;width:5.0px;transform:scaleX(1.252)">i</i><i style="left:136.8px;width:10.9px;transform:scaleX(1.125)">d</i><i style="left:147.7px;width:9.9px;transform:scaleX(1.041)">a</i><i style="left:157.7px;width:7.0px;transform:scaleX(1.300)">t</i><i style="left:164.6px;width:5.0px;transform:scaleX(1.252)">i</i><i style="left:169.6px;width:9.9px;transform:scaleX(1.041)">o</i><i style="left:179.5px;width:10.9px;transform:scaleX(1.125)">n</i><i style="left:190.4px;width:10.9px;transform:scaleX(0.971)">E</i><i style="left:201.4px;width:9.9px;transform:scaleX(1.135)">x</i><i style="left:211.3px;width:8.9px;transform:scaleX(1.042)">c</i><i style="left:220.3px;width:9.9px;transform:scaleX(1.041)">e</i><i style="left:230.2px;width:10.9px;transform:scaleX(1.125)">p</i><i style="left:241.1px;width:7.0px;transform:scaleX(1.300)">t</i><i style="left:248.1px;width:5.0px;transform:scaleX(1.252)">i</i><i style="left:253.0px;width:9.9px;transform:scaleX(1.041)">o</i><i style="left:263.0px;width:10.9px;transform:scaleX(1.125)">n</i><i style="left:273.9px;width:7.9px;transform:scaleX(1.300)">:</i><i style="left:281.9px;width:7.9px;transform:scaleX(1.300)">:</i><i style="left:289.8px;width:8.9px;transform:scaleX(1.042)">c</i><i style="left:298.8px;width:5.0px;transform:scaleX(1.252)">l</i><i style="left:303.7px;width:9.9px;transform:scaleX(1.041)">a</i><i style="left:313.7px;width:8.9px;transform:scaleX(1.042)">s</i><i style="left:322.6px;width:8.9px;transform:scaleX(1.042)">s</i><i style="left:331.5px;width:6.0px;transform:scaleX(1.210)">,</i></div><div class="num" style="left:0;width:39px;top:282px;font-size:17px;line-height:20px">21</div><div class="ln" style="left:0;top:282px;font-size:17px;line-height:20px"><i style="left:81.0px;width:8.0px;transform:scaleX(1.300);color:#f8d838;font-weight:bold">]</i><i style="left:89.0px;width:8.0px;transform:scaleX(1.300)">;</i></div><div class="num" style="left:0;width:39px;top:302px;font-size:17px;line-height:20px">22</div><div class="ln" style="left:0;top:302px;font-size:17px;line-height:20px"><i style="left:81.0px;width:8.0px;transform:scaleX(1.300)">/</i><i style="left:89.0px;width:11.0px;transform:scaleX(1.300)">*</i><i style="left:100.0px;width:11.0px;transform:scaleX(1.300)">*</i></div><div class="num" style="left:0;width:39px;top:322px;font-size:17px;line-height:20px">23</div><div class="ln" style="left:0;top:322px;font-size:17px;line-height:20px"><i style="left:86.9px;width:10.9px;transform:scaleX(1.300)">*</i><i style="left:103.8px;width:11.9px;transform:scaleX(0.975)">R</i><i style="left:115.7px;width:9.9px;transform:scaleX(1.039)">e</i><i style="left:125.6px;width:10.9px;transform:scaleX(1.122)">p</i><i style="left:136.5px;width:9.9px;transform:scaleX(1.039)">o</i><i style="left:146.4px;width:6.9px;transform:scaleX(1.180)">r</i><i style="left:153.3px;width:6.9px;transform:scaleX(1.300)">t</i><i style="left:166.2px;width:9.9px;transform:scaleX(1.039)">o</i><i style="left:176.1px;width:6.9px;transform:scaleX(1.180)">r</i><i style="left:189.0px;width:5.0px;transform:scaleX(1.250)">l</i><i style="left:194.0px;width:9.9px;transform:scaleX(1.039)">o</i><i style="left:203.9px;width:10.9px;transform:scaleX(1.122)">g</i><i style="left:220.7px;width:9.9px;transform:scaleX(1.039)">a</i><i style="left:230.6px;width:10.9px;transform:scaleX(1.122)">n</i><i style="left:247.5px;width:9.9px;transform:scaleX(1.039)">e</i><i style="left:257.4px;width:9.9px;transform:scaleX(1.133)">x</i><i style="left:267.3px;width:8.9px;transform:scaleX(1.039)">c</i><i style="left:276.2px;width:9.9px;transform:scaleX(1.039)">e</i><i style="left:286.1px;width:10.9px;transform:scaleX(1.122)">p</i><i style="left:297.0px;width:6.9px;transform:scaleX(1.300)">t</i><i style="left:304.0px;width:5.0px;transform:scaleX(1.250)">i</i><i style="left:308.9px;width:9.9px;transform:scaleX(1.039)">o</i><i style="left:318.9px;width:10.9px;transform:scaleX(1.122)">n</i><i style="left:329.8px;width:5.9px;transform:scaleX(1.207)">.</i></div><div class="num" style="left:0;width:39px;top:342px;font-size:17px;line-height:20px">24</div><div class="ln" style="left:0;top:342px;font-size:17px;line-height:20px"><i style="left:87.0px;width:11.0px;transform:scaleX(1.300)">*</i></div><div class="num" style="left:0;width:39px;top:362px;font-size:17px;line-height:20px">25</div><div class="ln" style="left:0;top:362px;font-size:17px;line-height:20px"><i style="left:87.0px;width:11.0px;transform:scaleX(1.300)">*</i><i style="left:103.9px;width:10.0px;transform:scaleX(0.968)">T</i><i style="left:113.9px;width:11.0px;transform:scaleX(1.127)">h</i><i style="left:124.8px;width:5.0px;transform:scaleX(1.255)">i</i><i style="left:129.8px;width:9.0px;transform:scaleX(1.044)">s</i><i style="left:144.8px;width:5.0px;transform:scaleX(1.255)">i</i><i style="left:149.7px;width:9.0px;transform:scaleX(1.044)">s</i><i style="left:164.7px;width:10.0px;transform:scaleX(1.043)">a</i><i style="left:180.6px;width:11.0px;transform:scaleX(1.127)">g</i><i style="left:191.6px;width:7.0px;transform:scaleX(1.186)">r</i><i style="left:198.6px;width:10.0px;transform:scaleX(1.043)">e</i><i style="left:208.5px;width:10.0px;transform:scaleX(1.043)">a</i><i style="left:218.5px;width:7.0px;transform:scaleX(1.300)">t</i><i style="left:231.4px;width:9.0px;transform:scaleX(1.044)">s</i><i style="left:240.4px;width:11.0px;transform:scaleX(1.127)">p</i><i style="left:251.4px;width:10.0px;transform:scaleX(1.043)">o</i><i style="left:261.3px;width:7.0px;transform:scaleX(1.300)">t</i><i style="left:274.3px;width:7.0px;transform:scaleX(1.300)">t</i><i style="left:281.3px;width:10.0px;transform:scaleX(1.043)">o</i><i style="left:297.2px;width:9.0px;transform:scaleX(1.044)">s</i><i style="left:306.2px;width:10.0px;transform:scaleX(1.043)">e</i><i style="left:316.1px;width:11.0px;transform:scaleX(1.127)">n</i><i style="left:327.1px;width:11.0px;transform:scaleX(1.127)">d</i><i style="left:344.0px;width:10.0px;transform:scaleX(1.043)">e</i><i style="left:354.0px;width:10.0px;transform:scaleX(1.138)">x</i><i style="left:364.0px;width:9.0px;transform:scaleX(1.044)">c</i><i style="left:372.9px;width:10.0px;transform:scaleX(1.043)">e</i><i style="left:382.9px;width:11.0px;transform:scaleX(1.127)">p</i><i style="left:393.8px;width:7.0px;transform:scaleX(1.300)">t</i><i style="left:400.8px;width:5.0px;transform:scaleX(1.255)">i</i><i style="left:405.8px;width:10.0px;transform:scaleX(1.043)">o</i><i style="left:415.8px;width:11.0px;transform:scaleX(1.127)">n</i><i style="left:426.7px;width:9.0px;transform:scaleX(1.044)">s</i><i style="left:441.7px;width:7.0px;transform:scaleX(1.300)">t</i><i style="left:448.6px;width:10.0px;transform:scaleX(1.043)">o</i><i style="left:464.6px;width:12.0px;transform:scaleX(1.044)">S</i><i style="left:476.5px;width:10.0px;transform:scaleX(1.043)">e</i><i style="left:486.5px;width:11.0px;transform:scaleX(1.127)">n</i><i style="left:497.5px;width:7.0px;transform:scaleX(1.300)">t</i><i style="left:504.4px;width:7.0px;transform:scaleX(1.186)">r</i><i style="left:511.4px;width:10.0px;transform:scaleX(1.138)">y</i><i style="left:521.4px;width:6.0px;transform:scaleX(1.213)">,</i><i style="left:533.3px;width:12.0px;transform:scaleX(1.044)">B</i><i style="left:545.3px;width:11.0px;transform:scaleX(1.127)">u</i><i style="left:556.3px;width:11.0px;transform:scaleX(1.127)">g</i><i style="left:567.2px;width:9.0px;transform:scaleX(1.044)">s</i><i style="left:576.2px;width:11.0px;transform:scaleX(1.127)">n</i><i style="left:587.1px;width:10.0px;transform:scaleX(1.043)">a</i><i style="left:597.1px;width:11.0px;transform:scaleX(1.127)">g</i><i style="left:608.1px;width:6.0px;transform:scaleX(1.213)">,</i><i style="left:620.0px;width:10.0px;transform:scaleX(1.043)">e</i><i style="left:630.0px;width:7.0px;transform:scaleX(1.300)">t</i><i style="left:637.0px;width:9.0px;transform:scaleX(1.044)">c</i><i style="left:645.9px;width:6.0px;transform:scaleX(1.213)">.</i></div><div class="num" style="left:0;width:39px;top:382px;font-size:17px;line-height:20px">26</div><div class="ln" style="left:0;top:382px;font-size:17px;line-height:20px"><i style="left:87.0px;width:11.0px;transform:scaleX(1.300)">*</i></div><div class="num" style="left:0;width:39px;top:402px;font-size:17px;line-height:20px">27</div><div class="ln" style="left:0;top:402px;font-size:17px;line-height:20px"><i style="left:87.0px;width:10.9px;transform:scaleX(1.300)">*</i><i style="left:103.9px;width:16.9px;transform:scaleX(0.984)">@</i><i style="left:120.8px;width:10.9px;transform:scaleX(1.126)">p</i><i style="left:131.7px;width:9.9px;transform:scaleX(1.042)">a</i><i style="left:141.7px;width:7.0px;transform:scaleX(1.184)">r</i><i style="left:148.6px;width:9.9px;transform:scaleX(1.042)">a</i><i style="left:158.6px;width:16.9px;transform:scaleX(1.155)">m</i><i style="left:187.4px;width:8.0px;transform:scaleX(1.300)">\</i><i style="left:195.4px;width:10.9px;transform:scaleX(0.972)">E</i><i style="left:206.3px;width:9.9px;transform:scaleX(1.136)">x</i><i style="left:216.3px;width:9.0px;transform:scaleX(1.043)">c</i><i style="left:225.2px;width:9.9px;transform:scaleX(1.042)">e</i><i style="left:235.2px;width:10.9px;transform:scaleX(1.126)">p</i><i style="left:246.1px;width:7.0px;transform:scaleX(1.300)">t</i><i style="left:253.1px;width:5.0px;transform:scaleX(1.254)">i</i><i style="left:258.1px;width:9.9px;transform:scaleX(1.042)">o</i><i style="left:268.0px;width:10.9px;transform:scaleX(1.126)">n</i><i style="left:290.9px;width:10.9px;transform:scaleX(1.126)">$</i><i style="left:301.9px;width:9.9px;transform:scaleX(1.042)">e</i></div><div class="num" style="left:0;width:39px;top:422px;font-size:17px;line-height:20px">28</div><div class="ln" style="left:0;top:422px;font-size:17px;line-height:20px"><i style="left:86.9px;width:10.9px;transform:scaleX(1.300)">*</i><i style="left:103.7px;width:16.8px;transform:scaleX(0.978)">@</i><i style="left:120.5px;width:6.9px;transform:scaleX(1.176)">r</i><i style="left:127.4px;width:9.9px;transform:scaleX(1.035)">e</i><i style="left:137.2px;width:6.9px;transform:scaleX(1.300)">t</i><i style="left:144.1px;width:10.9px;transform:scaleX(1.118)">u</i><i style="left:155.0px;width:6.9px;transform:scaleX(1.176)">r</i><i style="left:161.9px;width:10.9px;transform:scaleX(1.118)">n</i><i style="left:178.7px;width:9.9px;transform:scaleX(1.129)">v</i><i style="left:188.5px;width:9.9px;transform:scaleX(1.035)">o</i><i style="left:198.4px;width:4.9px;transform:scaleX(1.245)">i</i><i style="left:203.3px;width:10.9px;transform:scaleX(1.118)">d</i></div><div class="num" style="left:0;width:39px;top:442px;font-size:17px;line-height:20px">29</div><div class="ln" style="left:0;top:442px;font-size:17px;line-height:20px"><i style="left:87.0px;width:11.0px;transform:scaleX(1.300)">*</i><i style="left:98.0px;width:8.0px;transform:scaleX(1.300)">/</i></div><div class="num" style="left:0;width:39px;top:462px;font-size:17px;line-height:20px">30</div><div class="ln" style="left:0;top:462px;font-size:17px;line-height:20px"><i style="left:81.0px;width:10.9px;transform:scaleX(1.125)">p</i><i style="left:91.9px;width:10.9px;transform:scaleX(1.125)">u</i><i style="left:102.9px;width:10.9px;transform:scaleX(1.125)">b</i><i style="left:113.8px;width:5.0px;transform:scaleX(1.252)">l</i><i style="left:118.8px;width:5.0px;transform:scaleX(1.252)">i</i><i style="left:123.7px;width:8.9px;transform:scaleX(1.042)">c</i><i style="left:138.6px;width:6.0px;transform:scaleX(1.210)">f</i><i style="left:144.6px;width:10.9px;transform:scaleX(1.125)">u</i><i style="left:155.5px;width:10.9px;transform:scaleX(1.125)">n</i><i style="left:166.5px;width:8.9px;transform:scaleX(1.042)">c</i><i style="left:175.4px;width:7.0px;transform:scaleX(1.300)">t</i><i style="left:182.3px;width:5.0px;transform:scaleX(1.252)">i</i><i style="left:187.3px;width:9.9px;transform:scaleX(1.041)">o</i><i style="left:197.3px;width:10.9px;transform:scaleX(1.125)">n</i><i style="left:214.1px;width:7.0px;transform:scaleX(1.183)">r</i><i style="left:221.1px;width:9.9px;transform:scaleX(1.041)">e</i><i style="left:231.0px;width:10.9px;transform:scaleX(1.125)">p</i><i style="left:242.0px;width:9.9px;transform:scaleX(1.041)">o</i><i style="left:251.9px;width:7.0px;transform:scaleX(1.183)">r</i><i style="left:258.9px;width:7.0px;transform:scaleX(1.300)">t</i><i style="left:265.8px;width:7.9px;transform:scaleX(1.300)">(</i><i style="left:273.8px;width:10.9px;transform:scaleX(0.971)">E</i><i style="left:284.7px;width:9.9px;transform:scaleX(1.135)">x</i><i style="left:294.6px;width:8.9px;transform:scaleX(1.042)">c</i><i style="left:303.6px;width:9.9px;transform:scaleX(1.041)">e</i><i style="left:313.5px;width:10.9px;transform:scaleX(1.125)">p</i><i style="left:324.4px;width:7.0px;transform:scaleX(1.300)">t</i><i style="left:331.4px;width:5.0px;transform:scaleX(1.252)">i</i><i style="left:336.4px;width:9.9px;transform:scaleX(1.041)">o</i><i style="left:346.3px;width:10.9px;transform:scaleX(1.125)">n</i><i style="left:363.2px;width:10.9px;transform:scaleX(1.125)">$</i><i style="left:374.1px;width:9.9px;transform:scaleX(1.041)">e</i><i style="left:384.1px;width:7.9px;transform:scaleX(1.300)">)</i></div><div class="num" style="left:0;width:39px;top:482px;font-size:17px;line-height:20px">31</div><div class="ln" style="left:0;top:482px;font-size:17px;line-height:20px"><i style="left:81.0px;width:11.0px;transform:scaleX(1.300)">{</i></div><div class="num" style="left:0;width:39px;top:502px;font-size:17px;line-height:20px">32</div><div class="ln" style="left:0;top:502px;font-size:17px;line-height:20px"><i style="left:105.0px;width:10.9px;transform:scaleX(1.119)">p</i><i style="left:115.9px;width:9.9px;transform:scaleX(1.036)">a</i><i style="left:125.7px;width:6.9px;transform:scaleX(1.177)">r</i><i style="left:132.7px;width:9.9px;transform:scaleX(1.036)">e</i><i style="left:142.5px;width:10.9px;transform:scaleX(1.119)">n</i><i style="left:153.4px;width:6.9px;transform:scaleX(1.300)">t</i><i style="left:160.3px;width:7.9px;transform:scaleX(1.300)">:</i><i style="left:168.2px;width:7.9px;transform:scaleX(1.300)">:</i><i style="left:176.1px;width:6.9px;transform:scaleX(1.177)">r</i><i style="left:183.0px;width:9.9px;transform:scaleX(1.036)">e</i><i style="left:192.9px;width:10.9px;transform:scaleX(1.119)">p</i><i style="left:203.8px;width:9.9px;transform:scaleX(1.036)">o</i><i style="left:213.6px;width:6.9px;transform:scaleX(1.177)">r</i><i style="left:220.5px;width:6.9px;transform:scaleX(1.300)">t</i><i style="left:227.5px;width:7.9px;transform:scaleX(1.300)">(</i><i style="left:235.4px;width:10.9px;transform:scaleX(1.119)">$</i><i style="left:246.2px;width:9.9px;transform:scaleX(1.036)">e</i><i style="left:256.1px;width:7.9px;transform:scaleX(1.300)">)</i><i style="left:264.0px;width:7.9px;transform:scaleX(1.300)">;</i></div><div class="num" style="left:0;width:39px;top:522px;font-size:17px;line-height:20px">33</div><div class="ln" style="left:0;top:522px;font-size:17px;line-height:20px"><i style="left:81.0px;width:11.0px;transform:scaleX(1.300)">}</i></div><div class="num" style="left:0;width:39px;top:542px;font-size:17px;line-height:20px">34</div><div class="ln" style="left:0;top:542px;font-size:17px;line-height:20px"><i style="left:81.0px;width:8.0px;transform:scaleX(1.300)">/</i><i style="left:89.0px;width:11.0px;transform:scaleX(1.300)">*</i><i style="left:100.0px;width:11.0px;transform:scaleX(1.300)">*</i></div><div class="num" style="left:0;width:39px;top:562px;font-size:17px;line-height:20px">35</div><div class="ln" style="left:0;top:562px;font-size:17px;line-height:20px"><i style="left:87.0px;width:10.9px;transform:scaleX(1.300)">*</i><i style="left:103.9px;width:11.9px;transform:scaleX(0.977)">R</i><i style="left:115.8px;width:9.9px;transform:scaleX(1.041)">e</i><i style="left:125.7px;width:10.9px;transform:scaleX(1.125)">n</i><i style="left:136.6px;width:10.9px;transform:scaleX(1.125)">d</i><i style="left:147.6px;width:9.9px;transform:scaleX(1.041)">e</i><i style="left:157.5px;width:7.0px;transform:scaleX(1.183)">r</i><i style="left:170.4px;width:9.9px;transform:scaleX(1.041)">a</i><i style="left:180.4px;width:10.9px;transform:scaleX(1.125)">n</i><i style="left:197.2px;width:9.9px;transform:scaleX(1.041)">e</i><i style="left:207.2px;width:9.9px;transform:scaleX(1.135)">x</i><i style="left:217.1px;width:8.9px;transform:scaleX(1.042)">c</i><i style="left:226.1px;width:9.9px;transform:scaleX(1.041)">e</i><i style="left:236.0px;width:10.9px;transform:scaleX(1.125)">p</i><i style="left:246.9px;width:7.0px;transform:scaleX(1.300)">t</i><i style="left:253.9px;width:5.0px;transform:scaleX(1.252)">i</i><i style="left:258.8px;width:9.9px;transform:scaleX(1.041)">o</i><i style="left:268.8px;width:10.9px;transform:scaleX(1.125)">n</i><i style="left:285.7px;width:5.0px;transform:scaleX(1.252)">i</i><i style="left:290.6px;width:10.9px;transform:scaleX(1.125)">n</i><i style="left:301.6px;width:7.0px;transform:scaleX(1.300)">t</i><i style="left:308.5px;width:9.9px;transform:scaleX(1.041)">o</i><i style="left:324.4px;width:9.9px;transform:scaleX(1.041)">a</i><i style="left:334.4px;width:10.9px;transform:scaleX(1.125)">n</i><i style="left:351.2px;width:12.9px;transform:scaleX(1.042)">H</i><i style="left:364.2px;width:9.9px;transform:scaleX(0.965)">T</i><i style="left:374.1px;width:9.9px;transform:scaleX(0.965)">T</i><i style="left:384.0px;width:9.9px;transform:scaleX(0.901)">P</i><i style="left:399.9px;width:7.0px;transform:scaleX(1.183)">r</i><i style="left:406.9px;width:9.9px;transform:scaleX(1.041)">e</i><i style="left:416.8px;width:8.9px;transform:scaleX(1.042)">s</i><i style="left:425.8px;width:10.9px;transform:scaleX(1.125)">p</i><i style="left:436.7px;width:9.9px;transform:scaleX(1.041)">o</i><i style="left:446.6px;width:10.9px;transform:scaleX(1.125)">n</i><i style="left:457.6px;width:8.9px;transform:scaleX(1.042)">s</i><i style="left:466.5px;width:9.9px;transform:scaleX(1.041)">e</i><i style="left:476.4px;width:6.0px;transform:scaleX(1.210)">.</i></div><div class="num" style="left:0;width:39px;top:582px;font-size:17px;line-height:20px">36</div><div class="ln" style="left:0;top:582px;font-size:17px;line-height:20px"><i style="left:87.0px;width:11.0px;transform:scaleX(1.300)">*</i></div><div class="num" style="left:0;width:39px;top:602px;font-size:17px;line-height:20px">37</div><div class="ln" style="left:0;top:602px;font-size:17px;line-height:20px"><i style="left:87.0px;width:11.0px;transform:scaleX(1.300)">*</i><i style="left:104.0px;width:17.0px;transform:scaleX(0.988)">@</i><i style="left:121.0px;width:11.0px;transform:scaleX(1.131)">p</i><i style="left:132.0px;width:10.0px;transform:scaleX(1.047)">a</i><i style="left:142.0px;width:7.0px;transform:scaleX(1.190)">r</i><i style="left:149.0px;width:10.0px;transform:scaleX(1.047)">a</i><i style="left:159.0px;width:17.0px;transform:scaleX(1.161)">m</i><i style="left:188.1px;width:8.0px;transform:scaleX(1.300)">\</i><i style="left:196.1px;width:7.0px;transform:scaleX(1.300)">I</i><i style="left:203.1px;width:5.0px;transform:scaleX(1.260)">l</i><i style="left:208.1px;width:5.0px;transform:scaleX(1.260)">l</i><i style="left:213.1px;width:11.0px;transform:scaleX(1.131)">u</i><i style="left:224.1px;width:17.0px;transform:scaleX(1.161)">m</i><i style="left:241.1px;width:5.0px;transform:scaleX(1.260)">i</i><i style="left:246.1px;width:11.0px;transform:scaleX(1.131)">n</i><i style="left:257.1px;width:10.0px;transform:scaleX(1.047)">a</i><i style="left:267.1px;width:7.0px;transform:scaleX(1.300)">t</i><i style="left:274.1px;width:10.0px;transform:scaleX(1.047)">e</i><i style="left:284.1px;width:8.0px;transform:scaleX(1.300)">\</i><i style="left:292.1px;width:13.0px;transform:scaleX(1.048)">H</i><i style="left:305.1px;width:7.0px;transform:scaleX(1.300)">t</i><i style="left:312.1px;width:7.0px;transform:scaleX(1.300)">t</i><i style="left:319.1px;width:11.0px;transform:scaleX(1.131)">p</i><i style="left:330.1px;width:8.0px;transform:scaleX(1.300)">\</i><i style="left:338.1px;width:12.0px;transform:scaleX(0.982)">R</i><i style="left:350.1px;width:10.0px;transform:scaleX(1.047)">e</i><i style="left:360.1px;width:11.0px;transform:scaleX(1.131)">q</i><i style="left:371.1px;width:11.0px;transform:scaleX(1.131)">u</i><i style="left:382.1px;width:10.0px;transform:scaleX(1.047)">e</i><i style="left:392.1px;width:9.0px;transform:scaleX(1.047)">s</i><i style="left:401.2px;width:7.0px;transform:scaleX(1.300)">t</i><i style="left:420.2px;width:11.0px;transform:scaleX(1.131)">$</i><i style="left:431.2px;width:7.0px;transform:scaleX(1.190)">r</i><i style="left:438.2px;width:10.0px;transform:scaleX(1.047)">e</i><i style="left:448.2px;width:11.0px;transform:scaleX(1.131)">q</i><i style="left:459.2px;width:11.0px;transform:scaleX(1.131)">u</i><i style="left:470.2px;width:10.0px;transform:scaleX(1.047)">e</i><i style="left:480.2px;width:9.0px;transform:scaleX(1.047)">s</i><i style="left:489.2px;width:7.0px;transform:scaleX(1.300)">t</i></div><div class="num" style="left:0;width:39px;top:622px;font-size:17px;line-height:20px">38</div><div class="ln" style="left:0;top:622px;font-size:17px;line-height:20px"><i style="left:87.0px;width:10.9px;transform:scaleX(1.300)">*</i><i style="left:103.9px;width:16.9px;transform:scaleX(0.984)">@</i><i style="left:120.8px;width:10.9px;transform:scaleX(1.126)">p</i><i style="left:131.7px;width:9.9px;transform:scaleX(1.041)">a</i><i style="left:141.7px;width:7.0px;transform:scaleX(1.184)">r</i><i style="left:148.6px;width:9.9px;transform:scaleX(1.041)">a</i><i style="left:158.6px;width:16.9px;transform:scaleX(1.155)">m</i><i style="left:187.4px;width:8.0px;transform:scaleX(1.300)">\</i><i style="left:195.4px;width:10.9px;transform:scaleX(0.972)">E</i><i style="left:206.3px;width:9.9px;transform:scaleX(1.136)">x</i><i style="left:216.2px;width:8.9px;transform:scaleX(1.042)">c</i><i style="left:225.2px;width:9.9px;transform:scaleX(1.041)">e</i><i style="left:235.1px;width:10.9px;transform:scaleX(1.126)">p</i><i style="left:246.1px;width:7.0px;transform:scaleX(1.300)">t</i><i style="left:253.0px;width:5.0px;transform:scaleX(1.253)">i</i><i style="left:258.0px;width:9.9px;transform:scaleX(1.041)">o</i><i style="left:267.9px;width:10.9px;transform:scaleX(1.126)">n</i><i style="left:290.8px;width:10.9px;transform:scaleX(1.126)">$</i><i style="left:301.8px;width:9.9px;transform:scaleX(1.041)">e</i></div><div class="num" style="left:0;width:39px;top:642px;font-size:17px;line-height:20px">39</div><div class="ln" style="left:0;top:642px;font-size:17px;line-height:20px"><i style="left:87.0px;width:11.0px;transform:scaleX(1.300)">*</i><i style="left:104.0px;width:17.0px;transform:scaleX(0.988)">@</i><i style="left:121.0px;width:7.0px;transform:scaleX(1.189)">r</i><i style="left:128.0px;width:10.0px;transform:scaleX(1.046)">e</i><i style="left:138.0px;width:7.0px;transform:scaleX(1.300)">t</i><i style="left:145.0px;width:11.0px;transform:scaleX(1.130)">u</i><i style="left:156.0px;width:7.0px;transform:scaleX(1.189)">r</i><i style="left:163.0px;width:11.0px;transform:scaleX(1.130)">n</i><i style="left:180.0px;width:8.0px;transform:scaleX(1.300)">\</i><i style="left:188.0px;width:7.0px;transform:scaleX(1.300)">I</i><i style="left:195.0px;width:5.0px;transform:scaleX(1.259)">l</i><i style="left:200.0px;width:5.0px;transform:scaleX(1.259)">l</i><i style="left:205.0px;width:11.0px;transform:scaleX(1.130)">u</i><i style="left:216.0px;width:17.0px;transform:scaleX(1.160)">m</i><i style="left:233.0px;width:5.0px;transform:scaleX(1.259)">i</i><i style="left:238.0px;width:11.0px;transform:scaleX(1.130)">n</i><i style="left:248.9px;width:10.0px;transform:scaleX(1.046)">a</i><i style="left:258.9px;width:7.0px;transform:scaleX(1.300)">t</i><i style="left:265.9px;width:10.0px;transform:scaleX(1.046)">e</i><i style="left:275.9px;width:8.0px;transform:scaleX(1.300)">\</i><i style="left:283.9px;width:13.0px;transform:scaleX(1.047)">H</i><i style="left:296.9px;width:7.0px;transform:scaleX(1.300)">t</i><i style="left:303.9px;width:7.0px;transform:scaleX(1.300)">t</i><i style="left:310.9px;width:11.0px;transform:scaleX(1.130)">p</i><i style="left:321.9px;width:8.0px;transform:scaleX(1.300)">\</i><i style="left:329.9px;width:12.0px;transform:scaleX(0.982)">R</i><i style="left:341.9px;width:10.0px;transform:scaleX(1.046)">e</i><i style="left:351.9px;width:9.0px;transform:scaleX(1.047)">s</i><i style="left:360.9px;width:11.0px;transform:scaleX(1.130)">p</i><i style="left:371.9px;width:10.0px;transform:scaleX(1.046)">o</i><i style="left:381.9px;width:11.0px;transform:scaleX(1.130)">n</i><i style="left:392.9px;width:9.0px;transform:scaleX(1.047)">s</i><i style="left:401.9px;width:10.0px;transform:scaleX(1.046)">e</i></div><div class="num" style="left:0;width:39px;top:662px;font-size:17px;line-height:20px">40</div><div class="ln" style="left:0;top:662px;font-size:17px;line-height:20px"><i style="left:87.0px;width:11.0px;transform:scaleX(1.300)">*</i><i style="left:98.0px;width:8.0px;transform:scaleX(1.300)">/</i></div><div class="num" style="left:0;width:39px;top:682px;font-size:17px;line-height:20px">41</div><div class="ln" style="left:0;top:682px;font-size:17px;line-height:20px"><i style="left:81.0px;width:10.9px;transform:scaleX(1.126)">p</i><i style="left:91.9px;width:10.9px;transform:scaleX(1.126)">u</i><i style="left:102.9px;width:10.9px;transform:scaleX(1.126)">b</i><i style="left:113.8px;width:5.0px;transform:scaleX(1.254)">l</i><i style="left:118.8px;width:5.0px;transform:scaleX(1.254)">i</i><i style="left:123.8px;width:9.0px;transform:scaleX(1.043)">c</i><i style="left:138.7px;width:6.0px;transform:scaleX(1.212)">f</i><i style="left:144.7px;width:10.9px;transform:scaleX(1.126)">u</i><i style="left:155.6px;width:10.9px;transform:scaleX(1.126)">n</i><i style="left:166.6px;width:9.0px;transform:scaleX(1.043)">c</i><i style="left:175.6px;width:7.0px;transform:scaleX(1.300)">t</i><i style="left:182.5px;width:5.0px;transform:scaleX(1.254)">i</i><i style="left:187.5px;width:10.0px;transform:scaleX(1.042)">o</i><i style="left:197.5px;width:10.9px;transform:scaleX(1.126)">n</i><i style="left:214.4px;width:7.0px;transform:scaleX(1.185)">r</i><i style="left:221.3px;width:10.0px;transform:scaleX(1.042)">e</i><i style="left:231.3px;width:10.9px;transform:scaleX(1.126)">n</i><i style="left:242.2px;width:10.9px;transform:scaleX(1.126)">d</i><i style="left:253.2px;width:10.0px;transform:scaleX(1.042)">e</i><i style="left:263.1px;width:7.0px;transform:scaleX(1.185)">r</i><i style="left:270.1px;width:8.0px;transform:scaleX(1.300)">(</i><i style="left:278.1px;width:10.9px;transform:scaleX(1.126)">$</i><i style="left:289.0px;width:7.0px;transform:scaleX(1.185)">r</i><i style="left:296.0px;width:10.0px;transform:scaleX(1.042)">e</i><i style="left:305.9px;width:10.9px;transform:scaleX(1.126)">q</i><i style="left:316.9px;width:10.9px;transform:scaleX(1.126)">u</i><i style="left:327.8px;width:10.0px;transform:scaleX(1.042)">e</i><i style="left:337.8px;width:9.0px;transform:scaleX(1.043)">s</i><i style="left:346.7px;width:7.0px;transform:scaleX(1.300)">t</i><i style="left:353.7px;width:6.0px;transform:scaleX(1.212)">,</i><i style="left:365.7px;width:10.9px;transform:scaleX(0.972)">E</i><i style="left:376.6px;width:10.0px;transform:scaleX(1.137)">x</i><i style="left:386.6px;width:9.0px;transform:scaleX(1.043)">c</i><i style="left:395.5px;width:10.0px;transform:scaleX(1.042)">e</i><i style="left:405.5px;width:10.9px;transform:scaleX(1.126)">p</i><i style="left:416.4px;width:7.0px;transform:scaleX(1.300)">t</i><i style="left:423.4px;width:5.0px;transform:scaleX(1.254)">i</i><i style="left:428.4px;width:10.0px;transform:scaleX(1.042)">o</i><i style="left:438.3px;width:10.9px;transform:scaleX(1.126)">n</i><i style="left:455.2px;width:10.9px;transform:scaleX(1.126)">$</i><i style="left:466.2px;width:10.0px;transform:scaleX(1.042)">e</i><i style="left:476.1px;width:8.0px;transform:scaleX(1.300)">)</i></div><div class="num" style="left:0;width:39px;top:702px;font-size:17px;line-height:20px">42</div><div class="ln" style="left:0;top:702px;font-size:17px;line-height:20px"><i style="left:81.0px;width:11.0px;transform:scaleX(1.300)">{</i></div><div class="num" style="left:0;width:39px;top:722px;font-size:17px;line-height:20px">43</div><div class="ln" style="left:0;top:722px;font-size:17px;line-height:20px"><i style="left:105.0px;width:6.9px;transform:scaleX(1.181)">r</i><i style="left:111.9px;width:9.9px;transform:scaleX(1.039)">e</i><i style="left:121.9px;width:6.9px;transform:scaleX(1.300)">t</i><i style="left:128.8px;width:10.9px;transform:scaleX(1.123)">u</i><i style="left:139.7px;width:6.9px;transform:scaleX(1.181)">r</i><i style="left:146.6px;width:10.9px;transform:scaleX(1.123)">n</i><i style="left:163.5px;width:10.9px;transform:scaleX(1.123)">p</i><i style="left:174.4px;width:9.9px;transform:scaleX(1.039)">a</i><i style="left:184.3px;width:6.9px;transform:scaleX(1.181)">r</i><i style="left:191.3px;width:9.9px;transform:scaleX(1.039)">e</i><i style="left:201.2px;width:10.9px;transform:scaleX(1.123)">n</i><i style="left:212.1px;width:6.9px;transform:scaleX(1.300)">t</i><i style="left:219.0px;width:7.9px;transform:scaleX(1.300)">:</i><i style="left:227.0px;width:7.9px;transform:scaleX(1.300)">:</i><i style="left:234.9px;width:6.9px;transform:scaleX(1.181)">r</i><i style="left:241.8px;width:9.9px;transform:scaleX(1.039)">e</i><i style="left:251.8px;width:10.9px;transform:scaleX(1.123)">n</i><i style="left:262.7px;width:10.9px;transform:scaleX(1.123)">d</i><i style="left:273.6px;width:9.9px;transform:scaleX(1.039)">e</i><i style="left:283.5px;width:6.9px;transform:scaleX(1.181)">r</i><i style="left:290.4px;width:7.9px;transform:scaleX(1.300)">(</i><i style="left:298.4px;width:10.9px;transform:scaleX(1.123)">$</i><i style="left:309.3px;width:6.9px;transform:scaleX(1.181)">r</i><i style="left:316.2px;width:9.9px;transform:scaleX(1.039)">e</i><i style="left:326.1px;width:10.9px;transform:scaleX(1.123)">q</i><i style="left:337.0px;width:10.9px;transform:scaleX(1.123)">u</i><i style="left:347.9px;width:9.9px;transform:scaleX(1.039)">e</i><i style="left:357.8px;width:8.9px;transform:scaleX(1.040)">s</i><i style="left:366.8px;width:6.9px;transform:scaleX(1.300)">t</i><i style="left:373.7px;width:5.9px;transform:scaleX(1.208)">,</i><i style="left:385.6px;width:10.9px;transform:scaleX(1.123)">$</i><i style="left:396.5px;width:9.9px;transform:scaleX(1.039)">e</i><i style="left:406.4px;width:7.9px;transform:scaleX(1.300)">)</i><i style="left:414.4px;width:7.9px;transform:scaleX(1.300)">;</i></div><div class="num" style="left:0;width:39px;top:742px;font-size:17px;line-height:20px">44</div><div class="ln" style="left:0;top:742px;font-size:17px;line-height:20px"><i style="left:81.0px;width:11.0px;transform:scaleX(1.300)">}</i></div><div class="num" style="left:0;width:39px;top:762px;font-size:17px;line-height:20px">45</div><div class="ln" style="left:0;top:762px;font-size:17px;line-height:20px"><i style="left:57.0px;width:11.0px;transform:scaleX(1.300)">}</i></div></div><div class="a" style="left:743px;top:91px;width:19px;height:782px;background:#f0f0f0"></div><div class="a" style="left:744px;top:208px;width:16px;height:648px;background:#cdcdcd"></div><svg class="a" style="left:748px;top:97px" width="8" height="7" viewBox="0 0 8 7"><path d="M0.8 5.6 L4 2 L7.2 5.6" fill="none" stroke="#4a4a4a" stroke-width="2"/></svg><svg class="a" style="left:748px;top:861px" width="8" height="7" viewBox="0 0 8 7"><path d="M0.8 1.4 L4 5 L7.2 1.4" fill="none" stroke="#4a4a4a" stroke-width="2"/></svg><div class="a" style="left:775px;top:91px;width:732px;height:782px;background:#293134;overflow:hidden"><div class="a" style="left:0;top:0;width:53px;height:782px;background:#3f4b4e"></div><div class="a" style="left:53px;top:216px;width:732px;height:18px;background:#2f393c"></div><div class="num" style="left:0;width:38px;top:0.3px;font-size:15.5px;line-height:18px">1</div><div class="ln" style="left:0;top:0.3px;font-size:15.5px;line-height:18px"><i style="left:54.0px;width:12.9px;transform:scaleX(1.300)">&lt;</i><i style="left:66.9px;width:8.9px;transform:scaleX(1.030)">?</i><i style="left:75.9px;width:9.9px;transform:scaleX(1.123)">p</i><i style="left:85.8px;width:9.9px;transform:scaleX(1.123)">h</i><i style="left:95.8px;width:9.9px;transform:scaleX(1.123)">p</i></div><div class="num" style="left:0;width:38px;top:18.3px;font-size:15.5px;line-height:18px">2</div><div class="ln" style="left:0;top:18.3px;font-size:15.5px;line-height:18px"><i style="left:54.0px;width:9.8px;transform:scaleX(1.110)">n</i><i style="left:63.8px;width:9.8px;transform:scaleX(1.110)">a</i><i style="left:73.6px;width:15.7px;transform:scaleX(1.172)">m</i><i style="left:89.3px;width:9.8px;transform:scaleX(1.110)">e</i><i style="left:99.1px;width:8.8px;transform:scaleX(1.111)">s</i><i style="left:107.9px;width:9.8px;transform:scaleX(1.110)">p</i><i style="left:117.7px;width:9.8px;transform:scaleX(1.110)">a</i><i style="left:127.5px;width:8.8px;transform:scaleX(1.111)">c</i><i style="left:136.3px;width:9.8px;transform:scaleX(1.110)">e</i><i style="left:152.0px;width:10.8px;transform:scaleX(1.034)">A</i><i style="left:162.8px;width:9.8px;transform:scaleX(1.110)">p</i><i style="left:172.6px;width:9.8px;transform:scaleX(1.110)">p</i><i style="left:182.4px;width:6.9px;transform:scaleX(1.300)">\</i><i style="left:189.3px;width:9.8px;transform:scaleX(0.959)">E</i><i style="left:199.1px;width:9.8px;transform:scaleX(1.212)">x</i><i style="left:208.9px;width:8.8px;transform:scaleX(1.111)">c</i><i style="left:217.7px;width:9.8px;transform:scaleX(1.110)">e</i><i style="left:227.5px;width:9.8px;transform:scaleX(1.110)">p</i><i style="left:237.3px;width:5.9px;transform:scaleX(1.293)">t</i><i style="left:243.2px;width:4.9px;transform:scaleX(1.300)">i</i><i style="left:248.1px;width:9.8px;transform:scaleX(1.110)">o</i><i style="left:257.9px;width:9.8px;transform:scaleX(1.110)">n</i><i style="left:267.7px;width:8.8px;transform:scaleX(1.111)">s</i><i style="left:276.5px;width:6.9px;transform:scaleX(1.300)">;</i></div><div class="num" style="left:0;width:38px;top:36.3px;font-size:15.5px;line-height:18px">3</div><div class="ln" style="left:0;top:36.3px;font-size:15.5px;line-height:18px"><i style="left:54.0px;width:9.8px;transform:scaleX(1.110)">u</i><i style="left:63.8px;width:8.8px;transform:scaleX(1.111)">s</i><i style="left:72.6px;width:9.8px;transform:scaleX(1.110)">e</i><i style="left:88.3px;width:9.8px;transform:scaleX(0.959)">E</i><i style="left:98.1px;width:9.8px;transform:scaleX(1.212)">x</i><i style="left:107.9px;width:8.8px;transform:scaleX(1.111)">c</i><i style="left:116.7px;width:9.8px;transform:scaleX(1.110)">e</i><i style="left:126.5px;width:9.8px;transform:scaleX(1.110)">p</i><i style="left:136.3px;width:5.9px;transform:scaleX(1.293)">t</i><i style="left:142.2px;width:4.9px;transform:scaleX(1.300)">i</i><i style="left:147.1px;width:9.8px;transform:scaleX(1.110)">o</i><i style="left:156.9px;width:9.8px;transform:scaleX(1.110)">n</i><i style="left:166.7px;width:6.9px;transform:scaleX(1.300)">;</i></div><div class="num" style="left:0;width:38px;top:54.3px;font-size:15.5px;line-height:18px">4</div><div class="ln" style="left:0;top:54.3px;font-size:15.5px;line-height:18px"><i style="left:54.0px;width:10.0px;transform:scaleX(1.129)">u</i><i style="left:64.0px;width:9.0px;transform:scaleX(1.130)">s</i><i style="left:73.0px;width:10.0px;transform:scaleX(1.129)">e</i><i style="left:89.0px;width:7.0px;transform:scaleX(1.300)">I</i><i style="left:96.0px;width:5.0px;transform:scaleX(1.300)">l</i><i style="left:101.0px;width:5.0px;transform:scaleX(1.300)">l</i><i style="left:106.1px;width:10.0px;transform:scaleX(1.129)">u</i><i style="left:116.1px;width:16.0px;transform:scaleX(1.192)">m</i><i style="left:132.1px;width:5.0px;transform:scaleX(1.300)">i</i><i style="left:137.1px;width:10.0px;transform:scaleX(1.129)">n</i><i style="left:147.1px;width:10.0px;transform:scaleX(1.129)">a</i><i style="left:157.1px;width:6.0px;transform:scaleX(1.300)">t</i><i style="left:163.1px;width:10.0px;transform:scaleX(1.129)">e</i><i style="left:173.1px;width:7.0px;transform:scaleX(1.300)">\</i><i style="left:180.1px;width:11.0px;transform:scaleX(1.052)">V</i><i style="left:191.1px;width:10.0px;transform:scaleX(1.129)">a</i><i style="left:201.2px;width:5.0px;transform:scaleX(1.300)">l</i><i style="left:206.2px;width:5.0px;transform:scaleX(1.300)">i</i><i style="left:211.2px;width:10.0px;transform:scaleX(1.129)">d</i><i style="left:221.2px;width:10.0px;transform:scaleX(1.129)">a</i><i style="left:231.2px;width:6.0px;transform:scaleX(1.300)">t</i><i style="left:237.2px;width:5.0px;transform:scaleX(1.300)">i</i><i style="left:242.2px;width:10.0px;transform:scaleX(1.129)">o</i><i style="left:252.2px;width:10.0px;transform:scaleX(1.129)">n</i><i style="left:262.2px;width:7.0px;transform:scaleX(1.300)">\</i><i style="left:269.2px;width:11.0px;transform:scaleX(1.052)">V</i><i style="left:280.2px;width:10.0px;transform:scaleX(1.129)">a</i><i style="left:290.2px;width:5.0px;transform:scaleX(1.300)">l</i><i style="left:295.3px;width:5.0px;transform:scaleX(1.300)">i</i><i style="left:300.3px;width:10.0px;transform:scaleX(1.129)">d</i><i style="left:310.3px;width:10.0px;transform:scaleX(1.129)">a</i><i style="left:320.3px;width:6.0px;transform:scaleX(1.300)">t</i><i style="left:326.3px;width:5.0px;transform:scaleX(1.300)">i</i><i style="left:331.3px;width:10.0px;transform:scaleX(1.129)">o</i><i style="left:341.3px;width:10.0px;transform:scaleX(1.129)">n</i><i style="left:351.3px;width:10.0px;transform:scaleX(0.975)">E</i><i style="left:361.3px;width:10.0px;transform:scaleX(1.233)">x</i><i style="left:371.3px;width:9.0px;transform:scaleX(1.130)">c</i><i style="left:380.3px;width:10.0px;transform:scaleX(1.129)">e</i><i style="left:390.4px;width:10.0px;transform:scaleX(1.129)">p</i><i style="left:400.4px;width:6.0px;transform:scaleX(1.300)">t</i><i style="left:406.4px;width:5.0px;transform:scaleX(1.300)">i</i><i style="left:411.4px;width:10.0px;transform:scaleX(1.129)">o</i><i style="left:421.4px;width:10.0px;transform:scaleX(1.129)">n</i><i style="left:431.4px;width:7.0px;transform:scaleX(1.300)">;</i></div><div class="num" style="left:0;width:38px;top:72.3px;font-size:15.5px;line-height:18px">5</div><div class="ln" style="left:0;top:72.3px;font-size:15.5px;line-height:18px"><i style="left:54.0px;width:10.0px;transform:scaleX(1.124)">u</i><i style="left:64.0px;width:9.0px;transform:scaleX(1.125)">s</i><i style="left:72.9px;width:10.0px;transform:scaleX(1.124)">e</i><i style="left:88.8px;width:7.0px;transform:scaleX(1.300)">I</i><i style="left:95.8px;width:5.0px;transform:scaleX(1.300)">l</i><i style="left:100.8px;width:5.0px;transform:scaleX(1.300)">l</i><i style="left:105.8px;width:10.0px;transform:scaleX(1.124)">u</i><i style="left:115.7px;width:15.9px;transform:scaleX(1.187)">m</i><i style="left:131.6px;width:5.0px;transform:scaleX(1.300)">i</i><i style="left:136.6px;width:10.0px;transform:scaleX(1.124)">n</i><i style="left:146.6px;width:10.0px;transform:scaleX(1.124)">a</i><i style="left:156.5px;width:6.0px;transform:scaleX(1.300)">t</i><i style="left:162.5px;width:10.0px;transform:scaleX(1.124)">e</i><i style="left:172.4px;width:7.0px;transform:scaleX(1.300)">\</i><i style="left:179.4px;width:10.9px;transform:scaleX(1.047)">A</i><i style="left:190.4px;width:10.0px;transform:scaleX(1.124)">u</i><i style="left:200.3px;width:6.0px;transform:scaleX(1.300)">t</i><i style="left:206.3px;width:10.0px;transform:scaleX(1.124)">h</i><i style="left:216.2px;width:7.0px;transform:scaleX(1.300)">\</i><i style="left:223.2px;width:10.9px;transform:scaleX(1.047)">A</i><i style="left:234.2px;width:9.0px;transform:scaleX(1.125)">c</i><i style="left:243.1px;width:9.0px;transform:scaleX(1.125)">c</i><i style="left:252.1px;width:10.0px;transform:scaleX(1.124)">e</i><i style="left:262.0px;width:9.0px;transform:scaleX(1.125)">s</i><i style="left:271.0px;width:9.0px;transform:scaleX(1.125)">s</i><i style="left:279.9px;width:7.0px;transform:scaleX(1.300)">\</i><i style="left:286.9px;width:10.9px;transform:scaleX(1.047)">A</i><i style="left:297.9px;width:10.0px;transform:scaleX(1.124)">u</i><i style="left:307.8px;width:6.0px;transform:scaleX(1.300)">t</i><i style="left:313.8px;width:10.0px;transform:scaleX(1.124)">h</i><i style="left:323.7px;width:10.0px;transform:scaleX(1.124)">o</i><i style="left:333.7px;width:7.0px;transform:scaleX(1.280)">r</i><i style="left:340.7px;width:5.0px;transform:scaleX(1.300)">i</i><i style="left:345.6px;width:9.0px;transform:scaleX(1.125)">z</i><i style="left:354.6px;width:10.0px;transform:scaleX(1.124)">a</i><i style="left:364.5px;width:6.0px;transform:scaleX(1.300)">t</i><i style="left:370.5px;width:5.0px;transform:scaleX(1.300)">i</i><i style="left:375.5px;width:10.0px;transform:scaleX(1.124)">o</i><i style="left:385.5px;width:10.0px;transform:scaleX(1.124)">n</i><i style="left:395.4px;width:10.0px;transform:scaleX(0.970)">E</i><i style="left:405.4px;width:10.0px;transform:scaleX(1.227)">x</i><i style="left:415.3px;width:9.0px;transform:scaleX(1.125)">c</i><i style="left:424.3px;width:10.0px;transform:scaleX(1.124)">e</i><i style="left:434.2px;width:10.0px;transform:scaleX(1.124)">p</i><i style="left:444.2px;width:6.0px;transform:scaleX(1.300)">t</i><i style="left:450.1px;width:5.0px;transform:scaleX(1.300)">i</i><i style="left:455.1px;width:10.0px;transform:scaleX(1.124)">o</i><i style="left:465.1px;width:10.0px;transform:scaleX(1.124)">n</i><i style="left:475.0px;width:7.0px;transform:scaleX(1.300)">;</i></div><div class="num" style="left:0;width:38px;top:90.3px;font-size:15.5px;line-height:18px">6</div><div class="ln" style="left:0;top:90.3px;font-size:15.5px;line-height:18px"><i style="left:54.0px;width:10.0px;transform:scaleX(1.126)">u</i><i style="left:64.0px;width:9.0px;transform:scaleX(1.127)">s</i><i style="left:73.0px;width:10.0px;transform:scaleX(1.126)">e</i><i style="left:88.9px;width:7.0px;transform:scaleX(1.300)">I</i><i style="left:95.9px;width:5.0px;transform:scaleX(1.300)">l</i><i style="left:100.9px;width:5.0px;transform:scaleX(1.300)">l</i><i style="left:105.9px;width:10.0px;transform:scaleX(1.126)">u</i><i style="left:115.9px;width:16.0px;transform:scaleX(1.189)">m</i><i style="left:131.8px;width:5.0px;transform:scaleX(1.300)">i</i><i style="left:136.8px;width:10.0px;transform:scaleX(1.126)">n</i><i style="left:146.8px;width:10.0px;transform:scaleX(1.126)">a</i><i style="left:156.8px;width:6.0px;transform:scaleX(1.300)">t</i><i style="left:162.7px;width:10.0px;transform:scaleX(1.126)">e</i><i style="left:172.7px;width:7.0px;transform:scaleX(1.300)">\</i><i style="left:179.7px;width:13.0px;transform:scaleX(1.127)">D</i><i style="left:192.7px;width:10.0px;transform:scaleX(1.126)">a</i><i style="left:202.6px;width:6.0px;transform:scaleX(1.300)">t</i><i style="left:208.6px;width:10.0px;transform:scaleX(1.126)">a</i><i style="left:218.6px;width:10.0px;transform:scaleX(1.126)">b</i><i style="left:228.6px;width:10.0px;transform:scaleX(1.126)">a</i><i style="left:238.6px;width:9.0px;transform:scaleX(1.127)">s</i><i style="left:247.5px;width:10.0px;transform:scaleX(1.126)">e</i><i style="left:257.5px;width:7.0px;transform:scaleX(1.300)">\</i><i style="left:264.5px;width:10.0px;transform:scaleX(0.972)">E</i><i style="left:274.5px;width:5.0px;transform:scaleX(1.300)">l</i><i style="left:279.5px;width:10.0px;transform:scaleX(1.126)">o</i><i style="left:289.4px;width:10.0px;transform:scaleX(1.126)">q</i><i style="left:299.4px;width:10.0px;transform:scaleX(1.126)">u</i><i style="left:309.4px;width:10.0px;transform:scaleX(1.126)">e</i><i style="left:319.4px;width:10.0px;transform:scaleX(1.126)">n</i><i style="left:329.3px;width:6.0px;transform:scaleX(1.300)">t</i><i style="left:335.3px;width:7.0px;transform:scaleX(1.300)">\</i><i style="left:342.3px;width:14.0px;transform:scaleX(1.065)">M</i><i style="left:356.3px;width:10.0px;transform:scaleX(1.126)">o</i><i style="left:366.3px;width:10.0px;transform:scaleX(1.126)">d</i><i style="left:376.2px;width:10.0px;transform:scaleX(1.126)">e</i><i style="left:386.2px;width:5.0px;transform:scaleX(1.300)">l</i><i style="left:391.2px;width:12.0px;transform:scaleX(1.056)">N</i><i style="left:403.2px;width:10.0px;transform:scaleX(1.126)">o</i><i style="left:413.1px;width:6.0px;transform:scaleX(1.300)">t</i><i style="left:419.1px;width:9.0px;transform:scaleX(0.959)">F</i><i style="left:428.1px;width:10.0px;transform:scaleX(1.126)">o</i><i style="left:438.1px;width:10.0px;transform:scaleX(1.126)">u</i><i style="left:448.1px;width:10.0px;transform:scaleX(1.126)">n</i><i style="left:458.0px;width:10.0px;transform:scaleX(1.126)">d</i><i style="left:468.0px;width:10.0px;transform:scaleX(0.972)">E</i><i style="left:478.0px;width:10.0px;transform:scaleX(1.230)">x</i><i style="left:488.0px;width:9.0px;transform:scaleX(1.127)">c</i><i style="left:496.9px;width:10.0px;transform:scaleX(1.126)">e</i><i style="left:506.9px;width:10.0px;transform:scaleX(1.126)">p</i><i style="left:516.9px;width:6.0px;transform:scaleX(1.300)">t</i><i style="left:522.9px;width:5.0px;transform:scaleX(1.300)">i</i><i style="left:527.9px;width:10.0px;transform:scaleX(1.126)">o</i><i style="left:537.8px;width:10.0px;transform:scaleX(1.126)">n</i><i style="left:547.8px;width:7.0px;transform:scaleX(1.300)">;</i></div><div class="num" style="left:0;width:38px;top:108.3px;font-size:15.5px;line-height:18px">7</div><div class="ln" style="left:0;top:108.3px;font-size:15.5px;line-height:18px"><i style="left:54.0px;width:9.9px;transform:scaleX(1.120)">u</i><i style="left:63.9px;width:8.9px;transform:scaleX(1.121)">s</i><i style="left:72.8px;width:9.9px;transform:scaleX(1.120)">e</i><i style="left:88.7px;width:10.9px;transform:scaleX(1.044)">S</i><i style="left:99.6px;width:9.9px;transform:scaleX(1.224)">y</i><i style="left:109.5px;width:15.9px;transform:scaleX(1.183)">m</i><i style="left:125.4px;width:6.0px;transform:scaleX(1.300)">f</i><i style="left:131.4px;width:9.9px;transform:scaleX(1.120)">o</i><i style="left:141.3px;width:9.9px;transform:scaleX(1.120)">n</i><i style="left:151.2px;width:9.9px;transform:scaleX(1.224)">y</i><i style="left:161.1px;width:6.9px;transform:scaleX(1.300)">\</i><i style="left:168.0px;width:10.9px;transform:scaleX(0.980)">C</i><i style="left:179.0px;width:9.9px;transform:scaleX(1.120)">o</i><i style="left:188.9px;width:15.9px;transform:scaleX(1.183)">m</i><i style="left:204.7px;width:9.9px;transform:scaleX(1.120)">p</i><i style="left:214.7px;width:9.9px;transform:scaleX(1.120)">o</i><i style="left:224.6px;width:9.9px;transform:scaleX(1.120)">n</i><i style="left:234.5px;width:9.9px;transform:scaleX(1.120)">e</i><i style="left:244.4px;width:9.9px;transform:scaleX(1.120)">n</i><i style="left:254.3px;width:6.0px;transform:scaleX(1.300)">t</i><i style="left:260.3px;width:6.9px;transform:scaleX(1.300)">\</i><i style="left:267.2px;width:11.9px;transform:scaleX(1.050)">H</i><i style="left:279.1px;width:6.0px;transform:scaleX(1.300)">t</i><i style="left:285.1px;width:6.0px;transform:scaleX(1.300)">t</i><i style="left:291.0px;width:9.9px;transform:scaleX(1.120)">p</i><i style="left:300.9px;width:10.9px;transform:scaleX(1.044)">K</i><i style="left:311.8px;width:9.9px;transform:scaleX(1.120)">e</i><i style="left:321.8px;width:6.9px;transform:scaleX(1.276)">r</i><i style="left:328.7px;width:9.9px;transform:scaleX(1.120)">n</i><i style="left:338.6px;width:9.9px;transform:scaleX(1.120)">e</i><i style="left:348.5px;width:5.0px;transform:scaleX(1.300)">l</i><i style="left:353.5px;width:6.9px;transform:scaleX(1.300)">\</i><i style="left:360.4px;width:9.9px;transform:scaleX(0.967)">E</i><i style="left:370.3px;width:9.9px;transform:scaleX(1.224)">x</i><i style="left:380.3px;width:8.9px;transform:scaleX(1.121)">c</i><i style="left:389.2px;width:9.9px;transform:scaleX(1.120)">e</i><i style="left:399.1px;width:9.9px;transform:scaleX(1.120)">p</i><i style="left:409.0px;width:6.0px;transform:scaleX(1.300)">t</i><i style="left:415.0px;width:5.0px;transform:scaleX(1.300)">i</i><i style="left:419.9px;width:9.9px;transform:scaleX(1.120)">o</i><i style="left:429.8px;width:9.9px;transform:scaleX(1.120)">n</i><i style="left:439.8px;width:6.9px;transform:scaleX(1.300)">\</i><i style="left:446.7px;width:11.9px;transform:scaleX(1.050)">H</i><i style="left:458.6px;width:6.0px;transform:scaleX(1.300)">t</i><i style="left:464.6px;width:6.0px;transform:scaleX(1.300)">t</i><i style="left:470.5px;width:9.9px;transform:scaleX(1.120)">p</i><i style="left:480.4px;width:9.9px;transform:scaleX(0.967)">E</i><i style="left:490.3px;width:9.9px;transform:scaleX(1.224)">x</i><i style="left:500.3px;width:8.9px;transform:scaleX(1.121)">c</i><i style="left:509.2px;width:9.9px;transform:scaleX(1.120)">e</i><i style="left:519.1px;width:9.9px;transform:scaleX(1.120)">p</i><i style="left:529.0px;width:6.0px;transform:scaleX(1.300)">t</i><i style="left:535.0px;width:5.0px;transform:scaleX(1.300)">i</i><i style="left:539.9px;width:9.9px;transform:scaleX(1.120)">o</i><i style="left:549.8px;width:9.9px;transform:scaleX(1.120)">n</i><i style="left:559.8px;width:6.9px;transform:scaleX(1.300)">;</i></div><div class="num" style="left:0;width:38px;top:126.3px;font-size:15.5px;line-height:18px">8</div><div class="ln" style="left:0;top:126.3px;font-size:15.5px;line-height:18px"><i style="left:54.0px;width:9.9px;transform:scaleX(1.122)">u</i><i style="left:63.9px;width:8.9px;transform:scaleX(1.123)">s</i><i style="left:72.9px;width:9.9px;transform:scaleX(1.122)">e</i><i style="left:88.8px;width:7.0px;transform:scaleX(1.300)">I</i><i style="left:95.7px;width:5.0px;transform:scaleX(1.300)">l</i><i style="left:100.7px;width:5.0px;transform:scaleX(1.300)">l</i><i style="left:105.7px;width:9.9px;transform:scaleX(1.122)">u</i><i style="left:115.6px;width:15.9px;transform:scaleX(1.185)">m</i><i style="left:131.5px;width:5.0px;transform:scaleX(1.300)">i</i><i style="left:136.4px;width:9.9px;transform:scaleX(1.122)">n</i><i style="left:146.4px;width:9.9px;transform:scaleX(1.122)">a</i><i style="left:156.3px;width:6.0px;transform:scaleX(1.300)">t</i><i style="left:162.3px;width:9.9px;transform:scaleX(1.122)">e</i><i style="left:172.2px;width:7.0px;transform:scaleX(1.300)">\</i><i style="left:179.2px;width:8.9px;transform:scaleX(0.955)">F</i><i style="left:188.1px;width:9.9px;transform:scaleX(1.122)">o</i><i style="left:198.0px;width:9.9px;transform:scaleX(1.122)">u</i><i style="left:208.0px;width:9.9px;transform:scaleX(1.122)">n</i><i style="left:217.9px;width:9.9px;transform:scaleX(1.122)">d</i><i style="left:227.8px;width:9.9px;transform:scaleX(1.122)">a</i><i style="left:237.8px;width:6.0px;transform:scaleX(1.300)">t</i><i style="left:243.7px;width:5.0px;transform:scaleX(1.300)">i</i><i style="left:248.7px;width:9.9px;transform:scaleX(1.122)">o</i><i style="left:258.6px;width:9.9px;transform:scaleX(1.122)">n</i><i style="left:268.5px;width:7.0px;transform:scaleX(1.300)">\</i><i style="left:275.5px;width:9.9px;transform:scaleX(0.969)">E</i><i style="left:285.4px;width:9.9px;transform:scaleX(1.225)">x</i><i style="left:295.4px;width:8.9px;transform:scaleX(1.123)">c</i><i style="left:304.3px;width:9.9px;transform:scaleX(1.122)">e</i><i style="left:314.2px;width:9.9px;transform:scaleX(1.122)">p</i><i style="left:324.2px;width:6.0px;transform:scaleX(1.300)">t</i><i style="left:330.1px;width:5.0px;transform:scaleX(1.300)">i</i><i style="left:335.1px;width:9.9px;transform:scaleX(1.122)">o</i><i style="left:345.0px;width:9.9px;transform:scaleX(1.122)">n</i><i style="left:355.0px;width:8.9px;transform:scaleX(1.123)">s</i><i style="left:363.9px;width:7.0px;transform:scaleX(1.300)">\</i><i style="left:370.9px;width:11.9px;transform:scaleX(1.052)">H</i><i style="left:382.8px;width:9.9px;transform:scaleX(1.122)">a</i><i style="left:392.7px;width:9.9px;transform:scaleX(1.122)">n</i><i style="left:402.6px;width:9.9px;transform:scaleX(1.122)">d</i><i style="left:412.6px;width:5.0px;transform:scaleX(1.300)">l</i><i style="left:417.5px;width:9.9px;transform:scaleX(1.122)">e</i><i style="left:427.5px;width:7.0px;transform:scaleX(1.278)">r</i><i style="left:440.4px;width:9.9px;transform:scaleX(1.122)">a</i><i style="left:450.3px;width:8.9px;transform:scaleX(1.123)">s</i><i style="left:465.2px;width:9.9px;transform:scaleX(0.969)">E</i><i style="left:475.1px;width:9.9px;transform:scaleX(1.225)">x</i><i style="left:485.1px;width:8.9px;transform:scaleX(1.123)">c</i><i style="left:494.0px;width:9.9px;transform:scaleX(1.122)">e</i><i style="left:504.0px;width:9.9px;transform:scaleX(1.122)">p</i><i style="left:513.9px;width:6.0px;transform:scaleX(1.300)">t</i><i style="left:519.8px;width:5.0px;transform:scaleX(1.300)">i</i><i style="left:524.8px;width:9.9px;transform:scaleX(1.122)">o</i><i style="left:534.7px;width:9.9px;transform:scaleX(1.122)">n</i><i style="left:544.7px;width:11.9px;transform:scaleX(1.052)">H</i><i style="left:556.6px;width:9.9px;transform:scaleX(1.122)">a</i><i style="left:566.5px;width:9.9px;transform:scaleX(1.122)">n</i><i style="left:576.5px;width:9.9px;transform:scaleX(1.122)">d</i><i style="left:586.4px;width:5.0px;transform:scaleX(1.300)">l</i><i style="left:591.4px;width:9.9px;transform:scaleX(1.122)">e</i><i style="left:601.3px;width:7.0px;transform:scaleX(1.278)">r</i><i style="left:608.2px;width:7.0px;transform:scaleX(1.300)">;</i></div><div class="num" style="left:0;width:38px;top:144.3px;font-size:15.5px;line-height:18px">9</div><div class="ln" style="left:0;top:144.3px;font-size:15.5px;line-height:18px"><i style="left:54.0px;width:8.9px;transform:scaleX(1.119)">c</i><i style="left:62.9px;width:4.9px;transform:scaleX(1.300)">l</i><i style="left:67.9px;width:9.9px;transform:scaleX(1.118)">a</i><i style="left:77.7px;width:8.9px;transform:scaleX(1.119)">s</i><i style="left:86.7px;width:8.9px;transform:scaleX(1.119)">s</i><i style="left:101.5px;width:11.9px;transform:scaleX(1.049)">H</i><i style="left:113.4px;width:9.9px;transform:scaleX(1.118)">a</i><i style="left:123.3px;width:9.9px;transform:scaleX(1.118)">n</i><i style="left:133.2px;width:9.9px;transform:scaleX(1.118)">d</i><i style="left:143.1px;width:4.9px;transform:scaleX(1.300)">l</i><i style="left:148.0px;width:9.9px;transform:scaleX(1.118)">e</i><i style="left:157.9px;width:6.9px;transform:scaleX(1.274)">r</i><i style="left:170.8px;width:9.9px;transform:scaleX(1.118)">e</i><i style="left:180.7px;width:9.9px;transform:scaleX(1.221)">x</i><i style="left:190.5px;width:5.9px;transform:scaleX(1.300)">t</i><i style="left:196.5px;width:9.9px;transform:scaleX(1.118)">e</i><i style="left:206.4px;width:9.9px;transform:scaleX(1.118)">n</i><i style="left:216.3px;width:9.9px;transform:scaleX(1.118)">d</i><i style="left:226.2px;width:8.9px;transform:scaleX(1.119)">s</i><i style="left:241.0px;width:9.9px;transform:scaleX(0.966)">E</i><i style="left:250.9px;width:9.9px;transform:scaleX(1.221)">x</i><i style="left:260.8px;width:8.9px;transform:scaleX(1.119)">c</i><i style="left:269.7px;width:9.9px;transform:scaleX(1.118)">e</i><i style="left:279.6px;width:9.9px;transform:scaleX(1.118)">p</i><i style="left:289.5px;width:5.9px;transform:scaleX(1.300)">t</i><i style="left:295.4px;width:4.9px;transform:scaleX(1.300)">i</i><i style="left:300.4px;width:9.9px;transform:scaleX(1.118)">o</i><i style="left:310.3px;width:9.9px;transform:scaleX(1.118)">n</i><i style="left:320.2px;width:11.9px;transform:scaleX(1.049)">H</i><i style="left:332.0px;width:9.9px;transform:scaleX(1.118)">a</i><i style="left:341.9px;width:9.9px;transform:scaleX(1.118)">n</i><i style="left:351.8px;width:9.9px;transform:scaleX(1.118)">d</i><i style="left:361.7px;width:4.9px;transform:scaleX(1.300)">l</i><i style="left:366.7px;width:9.9px;transform:scaleX(1.118)">e</i><i style="left:376.6px;width:6.9px;transform:scaleX(1.274)">r</i></div><div class="num" style="left:0;width:38px;top:162.3px;font-size:15.5px;line-height:18px">10</div><div class="ln" style="left:0;top:162.3px;font-size:15.5px;line-height:18px"><i style="left:54.0px;width:9.9px;transform:scaleX(1.300)">{</i></div><div class="num" style="left:0;width:38px;top:180.3px;font-size:15.5px;line-height:18px">11</div><div class="ln" style="left:0;top:180.3px;font-size:15.5px;line-height:18px"><i style="left:78.0px;width:7.0px;transform:scaleX(1.300)">/</i><i style="left:85.0px;width:9.9px;transform:scaleX(1.300)">*</i><i style="left:94.9px;width:9.9px;transform:scaleX(1.300)">*</i></div><div class="num" style="left:0;width:38px;top:198.3px;font-size:15.5px;line-height:18px">12</div><div class="ln" style="left:0;top:198.3px;font-size:15.5px;line-height:18px"><i style="left:84.0px;width:10.0px;transform:scaleX(1.300)">*</i><i style="left:100.1px;width:11.0px;transform:scaleX(1.054)">A</i><i style="left:117.1px;width:5.0px;transform:scaleX(1.300)">l</i><i style="left:122.1px;width:5.0px;transform:scaleX(1.300)">i</i><i style="left:127.2px;width:9.0px;transform:scaleX(1.132)">s</i><i style="left:136.2px;width:6.0px;transform:scaleX(1.300)">t</i><i style="left:148.2px;width:10.0px;transform:scaleX(1.131)">o</i><i style="left:158.3px;width:6.0px;transform:scaleX(1.300)">f</i><i style="left:170.3px;width:6.0px;transform:scaleX(1.300)">t</i><i style="left:176.3px;width:10.0px;transform:scaleX(1.131)">h</i><i style="left:186.4px;width:10.0px;transform:scaleX(1.131)">e</i><i style="left:202.4px;width:10.0px;transform:scaleX(1.131)">e</i><i style="left:212.4px;width:10.0px;transform:scaleX(1.236)">x</i><i style="left:222.5px;width:9.0px;transform:scaleX(1.132)">c</i><i style="left:231.5px;width:10.0px;transform:scaleX(1.131)">e</i><i style="left:241.5px;width:10.0px;transform:scaleX(1.131)">p</i><i style="left:251.6px;width:6.0px;transform:scaleX(1.300)">t</i><i style="left:257.6px;width:5.0px;transform:scaleX(1.300)">i</i><i style="left:262.6px;width:10.0px;transform:scaleX(1.131)">o</i><i style="left:272.6px;width:10.0px;transform:scaleX(1.131)">n</i><i style="left:288.7px;width:6.0px;transform:scaleX(1.300)">t</i><i style="left:294.7px;width:10.0px;transform:scaleX(1.236)">y</i><i style="left:304.7px;width:10.0px;transform:scaleX(1.131)">p</i><i style="left:314.8px;width:10.0px;transform:scaleX(1.131)">e</i><i style="left:324.8px;width:9.0px;transform:scaleX(1.132)">s</i><i style="left:339.8px;width:6.0px;transform:scaleX(1.300)">t</i><i style="left:345.9px;width:10.0px;transform:scaleX(1.131)">h</i><i style="left:355.9px;width:10.0px;transform:scaleX(1.131)">a</i><i style="left:365.9px;width:6.0px;transform:scaleX(1.300)">t</i><i style="left:378.0px;width:9.0px;transform:scaleX(1.132)">s</i><i style="left:387.0px;width:10.0px;transform:scaleX(1.131)">h</i><i style="left:397.0px;width:10.0px;transform:scaleX(1.131)">o</i><i style="left:407.1px;width:10.0px;transform:scaleX(1.131)">u</i><i style="left:417.1px;width:5.0px;transform:scaleX(1.300)">l</i><i style="left:422.1px;width:10.0px;transform:scaleX(1.131)">d</i><i style="left:438.2px;width:10.0px;transform:scaleX(1.131)">n</i><i style="left:448.2px;width:10.0px;transform:scaleX(1.131)">o</i><i style="left:458.2px;width:6.0px;transform:scaleX(1.300)">t</i><i style="left:470.3px;width:10.0px;transform:scaleX(1.131)">b</i><i style="left:480.3px;width:10.0px;transform:scaleX(1.131)">e</i><i style="left:496.4px;width:7.0px;transform:scaleX(1.288)">r</i><i style="left:503.4px;width:10.0px;transform:scaleX(1.131)">e</i><i style="left:513.4px;width:10.0px;transform:scaleX(1.131)">p</i><i style="left:523.4px;width:10.0px;transform:scaleX(1.131)">o</i><i style="left:533.5px;width:7.0px;transform:scaleX(1.288)">r</i><i style="left:540.5px;width:6.0px;transform:scaleX(1.300)">t</i><i style="left:546.5px;width:10.0px;transform:scaleX(1.131)">e</i><i style="left:556.5px;width:10.0px;transform:scaleX(1.131)">d</i><i style="left:566.6px;width:6.0px;transform:scaleX(1.300)">.</i></div><div class="num" style="left:0;width:38px;top:216.3px;font-size:15.5px;line-height:18px">13</div><div class="ln" style="left:0;top:216.3px;font-size:15.5px;line-height:18px"><i style="left:84.0px;width:9.9px;transform:scaleX(1.300)">*</i></div><div class="num" style="left:0;width:38px;top:234.3px;font-size:15.5px;line-height:18px">14</div><div class="ln" style="left:0;top:234.3px;font-size:15.5px;line-height:18px"><i style="left:83.7px;width:9.5px;transform:scaleX(1.300)">*</i><i style="left:98.9px;width:15.2px;transform:scaleX(0.971)">@</i><i style="left:114.0px;width:9.5px;transform:scaleX(1.178)">v</i><i style="left:123.5px;width:9.5px;transform:scaleX(1.080)">a</i><i style="left:133.0px;width:6.6px;transform:scaleX(1.228)">r</i><i style="left:145.3px;width:9.5px;transform:scaleX(1.080)">a</i><i style="left:154.8px;width:6.6px;transform:scaleX(1.228)">r</i><i style="left:161.4px;width:6.6px;transform:scaleX(1.228)">r</i><i style="left:168.0px;width:9.5px;transform:scaleX(1.080)">a</i><i style="left:177.5px;width:9.5px;transform:scaleX(1.178)">y</i></div><div class="num" style="left:0;width:38px;top:252.3px;font-size:15.5px;line-height:18px">15</div><div class="ln" style="left:0;top:252.3px;font-size:15.5px;line-height:18px"><i style="left:84.0px;width:9.9px;transform:scaleX(1.300)">*</i><i style="left:93.9px;width:7.0px;transform:scaleX(1.300)">/</i></div><div class="num" style="left:0;width:38px;top:270.3px;font-size:15.5px;line-height:18px">16</div><div class="ln" style="left:0;top:270.3px;font-size:15.5px;line-height:18px"><i style="left:78.0px;width:10.0px;transform:scaleX(1.129)">p</i><i style="left:88.0px;width:7.0px;transform:scaleX(1.286)">r</i><i style="left:95.0px;width:10.0px;transform:scaleX(1.129)">o</i><i style="left:105.0px;width:6.0px;transform:scaleX(1.300)">t</i><i style="left:111.0px;width:10.0px;transform:scaleX(1.129)">e</i><i style="left:121.1px;width:9.0px;transform:scaleX(1.130)">c</i><i style="left:130.1px;width:6.0px;transform:scaleX(1.300)">t</i><i style="left:136.1px;width:10.0px;transform:scaleX(1.129)">e</i><i style="left:146.1px;width:10.0px;transform:scaleX(1.129)">d</i><i style="left:162.1px;width:10.0px;transform:scaleX(1.129)">$</i><i style="left:172.1px;width:10.0px;transform:scaleX(1.129)">d</i><i style="left:182.1px;width:10.0px;transform:scaleX(1.129)">o</i><i style="left:192.2px;width:10.0px;transform:scaleX(1.129)">n</i><i style="left:202.2px;width:6.0px;transform:scaleX(1.300)">t</i><i style="left:208.2px;width:11.0px;transform:scaleX(0.987)">R</i><i style="left:219.2px;width:10.0px;transform:scaleX(1.129)">e</i><i style="left:229.2px;width:10.0px;transform:scaleX(1.129)">p</i><i style="left:239.2px;width:10.0px;transform:scaleX(1.129)">o</i><i style="left:249.2px;width:7.0px;transform:scaleX(1.286)">r</i><i style="left:256.2px;width:6.0px;transform:scaleX(1.300)">t</i><i style="left:268.3px;width:13.0px;transform:scaleX(1.300)">=</i><i style="left:287.3px;width:7.0px;transform:scaleX(1.300)">[</i></div><div class="num" style="left:0;width:38px;top:288.3px;font-size:15.5px;line-height:18px">17</div><div class="ln" style="left:0;top:288.3px;font-size:15.5px;line-height:18px"><i style="left:102.0px;width:10.9px;transform:scaleX(1.045)">A</i><i style="left:112.9px;width:9.9px;transform:scaleX(1.122)">u</i><i style="left:122.9px;width:6.0px;transform:scaleX(1.300)">t</i><i style="left:128.8px;width:9.9px;transform:scaleX(1.122)">h</i><i style="left:138.7px;width:9.9px;transform:scaleX(1.122)">o</i><i style="left:148.7px;width:7.0px;transform:scaleX(1.278)">r</i><i style="left:155.6px;width:5.0px;transform:scaleX(1.300)">i</i><i style="left:160.6px;width:8.9px;transform:scaleX(1.123)">z</i><i style="left:169.5px;width:9.9px;transform:scaleX(1.122)">a</i><i style="left:179.5px;width:6.0px;transform:scaleX(1.300)">t</i><i style="left:185.4px;width:5.0px;transform:scaleX(1.300)">i</i><i style="left:190.4px;width:9.9px;transform:scaleX(1.122)">o</i><i style="left:200.3px;width:9.9px;transform:scaleX(1.122)">n</i><i style="left:210.3px;width:9.9px;transform:scaleX(0.969)">E</i><i style="left:220.2px;width:9.9px;transform:scaleX(1.225)">x</i><i style="left:230.1px;width:8.9px;transform:scaleX(1.123)">c</i><i style="left:239.1px;width:9.9px;transform:scaleX(1.122)">e</i><i style="left:249.0px;width:9.9px;transform:scaleX(1.122)">p</i><i style="left:258.9px;width:6.0px;transform:scaleX(1.300)">t</i><i style="left:264.9px;width:5.0px;transform:scaleX(1.300)">i</i><i style="left:269.9px;width:9.9px;transform:scaleX(1.122)">o</i><i style="left:279.8px;width:9.9px;transform:scaleX(1.122)">n</i><i style="left:289.7px;width:7.0px;transform:scaleX(1.300)">:</i><i style="left:296.7px;width:7.0px;transform:scaleX(1.300)">:</i><i style="left:303.6px;width:8.9px;transform:scaleX(1.123)">c</i><i style="left:312.6px;width:5.0px;transform:scaleX(1.300)">l</i><i style="left:317.5px;width:9.9px;transform:scaleX(1.122)">a</i><i style="left:327.5px;width:8.9px;transform:scaleX(1.123)">s</i><i style="left:336.4px;width:8.9px;transform:scaleX(1.123)">s</i><i style="left:345.3px;width:6.0px;transform:scaleX(1.300)">,</i></div><div class="num" style="left:0;width:38px;top:306.3px;font-size:15.5px;line-height:18px">18</div><div class="ln" style="left:0;top:306.3px;font-size:15.5px;line-height:18px"><i style="left:102.0px;width:11.9px;transform:scaleX(1.054)">H</i><i style="left:113.9px;width:6.0px;transform:scaleX(1.300)">t</i><i style="left:119.9px;width:6.0px;transform:scaleX(1.300)">t</i><i style="left:125.9px;width:10.0px;transform:scaleX(1.124)">p</i><i style="left:135.8px;width:10.0px;transform:scaleX(0.970)">E</i><i style="left:145.8px;width:10.0px;transform:scaleX(1.228)">x</i><i style="left:155.8px;width:9.0px;transform:scaleX(1.125)">c</i><i style="left:164.7px;width:10.0px;transform:scaleX(1.124)">e</i><i style="left:174.7px;width:10.0px;transform:scaleX(1.124)">p</i><i style="left:184.6px;width:6.0px;transform:scaleX(1.300)">t</i><i style="left:190.6px;width:5.0px;transform:scaleX(1.300)">i</i><i style="left:195.6px;width:10.0px;transform:scaleX(1.124)">o</i><i style="left:205.5px;width:10.0px;transform:scaleX(1.124)">n</i><i style="left:215.5px;width:7.0px;transform:scaleX(1.300)">:</i><i style="left:222.4px;width:7.0px;transform:scaleX(1.300)">:</i><i style="left:229.4px;width:9.0px;transform:scaleX(1.125)">c</i><i style="left:238.4px;width:5.0px;transform:scaleX(1.300)">l</i><i style="left:243.4px;width:10.0px;transform:scaleX(1.124)">a</i><i style="left:253.3px;width:9.0px;transform:scaleX(1.125)">s</i><i style="left:262.3px;width:9.0px;transform:scaleX(1.125)">s</i><i style="left:271.2px;width:6.0px;transform:scaleX(1.300)">,</i></div><div class="num" style="left:0;width:38px;top:324.3px;font-size:15.5px;line-height:18px">19</div><div class="ln" style="left:0;top:324.3px;font-size:15.5px;line-height:18px"><i style="left:102.0px;width:13.8px;transform:scaleX(1.056)">M</i><i style="left:115.8px;width:9.9px;transform:scaleX(1.116)">o</i><i style="left:125.7px;width:9.9px;transform:scaleX(1.116)">d</i><i style="left:135.6px;width:9.9px;transform:scaleX(1.116)">e</i><i style="left:145.4px;width:4.9px;transform:scaleX(1.300)">l</i><i style="left:150.4px;width:11.8px;transform:scaleX(1.046)">N</i><i style="left:162.2px;width:9.9px;transform:scaleX(1.116)">o</i><i style="left:172.1px;width:5.9px;transform:scaleX(1.300)">t</i><i style="left:178.0px;width:8.9px;transform:scaleX(0.951)">F</i><i style="left:186.9px;width:9.9px;transform:scaleX(1.116)">o</i><i style="left:196.7px;width:9.9px;transform:scaleX(1.116)">u</i><i style="left:206.6px;width:9.9px;transform:scaleX(1.116)">n</i><i style="left:216.5px;width:9.9px;transform:scaleX(1.116)">d</i><i style="left:226.4px;width:9.9px;transform:scaleX(0.964)">E</i><i style="left:236.2px;width:9.9px;transform:scaleX(1.219)">x</i><i style="left:246.1px;width:8.9px;transform:scaleX(1.117)">c</i><i style="left:255.0px;width:9.9px;transform:scaleX(1.116)">e</i><i style="left:264.8px;width:9.9px;transform:scaleX(1.116)">p</i><i style="left:274.7px;width:5.9px;transform:scaleX(1.300)">t</i><i style="left:280.6px;width:4.9px;transform:scaleX(1.300)">i</i><i style="left:285.6px;width:9.9px;transform:scaleX(1.116)">o</i><i style="left:295.4px;width:9.9px;transform:scaleX(1.116)">n</i><i style="left:305.3px;width:6.9px;transform:scaleX(1.300)">:</i><i style="left:312.2px;width:6.9px;transform:scaleX(1.300)">:</i><i style="left:319.1px;width:8.9px;transform:scaleX(1.117)">c</i><i style="left:328.0px;width:4.9px;transform:scaleX(1.300)">l</i><i style="left:332.9px;width:9.9px;transform:scaleX(1.116)">a</i><i style="left:342.8px;width:8.9px;transform:scaleX(1.117)">s</i><i style="left:351.7px;width:8.9px;transform:scaleX(1.117)">s</i><i style="left:360.6px;width:5.9px;transform:scaleX(1.300)">,</i></div><div class="num" style="left:0;width:38px;top:342.3px;font-size:15.5px;line-height:18px">20</div><div class="ln" style="left:0;top:342.3px;font-size:15.5px;line-height:18px"><i style="left:102.0px;width:10.9px;transform:scaleX(1.042)">V</i><i style="left:112.9px;width:9.9px;transform:scaleX(1.118)">a</i><i style="left:122.8px;width:4.9px;transform:scaleX(1.300)">l</i><i style="left:127.7px;width:4.9px;transform:scaleX(1.300)">i</i><i style="left:132.7px;width:9.9px;transform:scaleX(1.118)">d</i><i style="left:142.6px;width:9.9px;transform:scaleX(1.118)">a</i><i style="left:152.5px;width:5.9px;transform:scaleX(1.300)">t</i><i style="left:158.4px;width:4.9px;transform:scaleX(1.300)">i</i><i style="left:163.4px;width:9.9px;transform:scaleX(1.118)">o</i><i style="left:173.3px;width:9.9px;transform:scaleX(1.118)">n</i><i style="left:183.2px;width:9.9px;transform:scaleX(0.966)">E</i><i style="left:193.1px;width:9.9px;transform:scaleX(1.222)">x</i><i style="left:203.0px;width:8.9px;transform:scaleX(1.119)">c</i><i style="left:211.9px;width:9.9px;transform:scaleX(1.118)">e</i><i style="left:221.8px;width:9.9px;transform:scaleX(1.118)">p</i><i style="left:231.7px;width:5.9px;transform:scaleX(1.300)">t</i><i style="left:237.6px;width:4.9px;transform:scaleX(1.300)">i</i><i style="left:242.5px;width:9.9px;transform:scaleX(1.118)">o</i><i style="left:252.4px;width:9.9px;transform:scaleX(1.118)">n</i><i style="left:262.3px;width:6.9px;transform:scaleX(1.300)">:</i><i style="left:269.3px;width:6.9px;transform:scaleX(1.300)">:</i><i style="left:276.2px;width:8.9px;transform:scaleX(1.119)">c</i><i style="left:285.1px;width:4.9px;transform:scaleX(1.300)">l</i><i style="left:290.0px;width:9.9px;transform:scaleX(1.118)">a</i><i style="left:299.9px;width:8.9px;transform:scaleX(1.119)">s</i><i style="left:308.9px;width:8.9px;transform:scaleX(1.119)">s</i><i style="left:317.8px;width:5.9px;transform:scaleX(1.300)">,</i></div><div class="num" style="left:0;width:38px;top:360.3px;font-size:15.5px;line-height:18px">21</div><div class="ln" style="left:0;top:360.3px;font-size:15.5px;line-height:18px"><i style="left:78.0px;width:7.0px;transform:scaleX(1.300)">]</i><i style="left:85.0px;width:7.0px;transform:scaleX(1.300)">;</i></div><div class="num" style="left:0;width:38px;top:378.3px;font-size:15.5px;line-height:18px">22</div><div class="ln" style="left:0;top:378.3px;font-size:15.5px;line-height:18px"><i style="left:78.0px;width:7.0px;transform:scaleX(1.300)">/</i><i style="left:85.0px;width:9.9px;transform:scaleX(1.300)">*</i><i style="left:94.9px;width:9.9px;transform:scaleX(1.300)">*</i></div><div class="num" style="left:0;width:38px;top:396.3px;font-size:15.5px;line-height:18px">23</div><div class="ln" style="left:0;top:396.3px;font-size:15.5px;line-height:18px"><i style="left:83.9px;width:9.9px;transform:scaleX(1.300)">*</i><i style="left:99.7px;width:10.8px;transform:scaleX(0.974)">R</i><i style="left:110.5px;width:9.9px;transform:scaleX(1.114)">e</i><i style="left:120.4px;width:9.9px;transform:scaleX(1.114)">p</i><i style="left:130.2px;width:9.9px;transform:scaleX(1.114)">o</i><i style="left:140.1px;width:6.9px;transform:scaleX(1.269)">r</i><i style="left:147.0px;width:5.9px;transform:scaleX(1.298)">t</i><i style="left:158.8px;width:9.9px;transform:scaleX(1.114)">o</i><i style="left:168.6px;width:6.9px;transform:scaleX(1.269)">r</i><i style="left:181.4px;width:4.9px;transform:scaleX(1.300)">l</i><i style="left:186.4px;width:9.9px;transform:scaleX(1.114)">o</i><i style="left:196.2px;width:9.9px;transform:scaleX(1.114)">g</i><i style="left:212.0px;width:9.9px;transform:scaleX(1.114)">a</i><i style="left:221.8px;width:9.9px;transform:scaleX(1.114)">n</i><i style="left:237.6px;width:9.9px;transform:scaleX(1.114)">e</i><i style="left:247.4px;width:9.9px;transform:scaleX(1.217)">x</i><i style="left:257.3px;width:8.9px;transform:scaleX(1.115)">c</i><i style="left:266.2px;width:9.9px;transform:scaleX(1.114)">e</i><i style="left:276.0px;width:9.9px;transform:scaleX(1.114)">p</i><i style="left:285.9px;width:5.9px;transform:scaleX(1.298)">t</i><i style="left:291.8px;width:4.9px;transform:scaleX(1.300)">i</i><i style="left:296.7px;width:9.9px;transform:scaleX(1.114)">o</i><i style="left:306.5px;width:9.9px;transform:scaleX(1.114)">n</i><i style="left:316.4px;width:5.9px;transform:scaleX(1.298)">.</i></div><div class="num" style="left:0;width:38px;top:414.3px;font-size:15.5px;line-height:18px">24</div><div class="ln" style="left:0;top:414.3px;font-size:15.5px;line-height:18px"><i style="left:84.0px;width:9.9px;transform:scaleX(1.300)">*</i></div><div class="num" style="left:0;width:38px;top:432.3px;font-size:15.5px;line-height:18px">25</div><div class="ln" style="left:0;top:432.3px;font-size:15.5px;line-height:18px"><i style="left:84.0px;width:10.0px;transform:scaleX(1.300)">*</i><i style="left:99.9px;width:10.0px;transform:scaleX(1.043)">T</i><i style="left:109.9px;width:10.0px;transform:scaleX(1.126)">h</i><i style="left:119.9px;width:5.0px;transform:scaleX(1.300)">i</i><i style="left:124.9px;width:9.0px;transform:scaleX(1.127)">s</i><i style="left:139.8px;width:5.0px;transform:scaleX(1.300)">i</i><i style="left:144.8px;width:9.0px;transform:scaleX(1.127)">s</i><i style="left:159.8px;width:10.0px;transform:scaleX(1.126)">a</i><i style="left:175.7px;width:10.0px;transform:scaleX(1.126)">g</i><i style="left:185.7px;width:7.0px;transform:scaleX(1.282)">r</i><i style="left:192.7px;width:10.0px;transform:scaleX(1.126)">e</i><i style="left:202.7px;width:10.0px;transform:scaleX(1.126)">a</i><i style="left:212.6px;width:6.0px;transform:scaleX(1.300)">t</i><i style="left:224.6px;width:9.0px;transform:scaleX(1.127)">s</i><i style="left:233.6px;width:10.0px;transform:scaleX(1.126)">p</i><i style="left:243.5px;width:10.0px;transform:scaleX(1.126)">o</i><i style="left:253.5px;width:6.0px;transform:scaleX(1.300)">t</i><i style="left:265.5px;width:6.0px;transform:scaleX(1.300)">t</i><i style="left:271.5px;width:10.0px;transform:scaleX(1.126)">o</i><i style="left:287.4px;width:9.0px;transform:scaleX(1.127)">s</i><i style="left:296.4px;width:10.0px;transform:scaleX(1.126)">e</i><i style="left:306.4px;width:10.0px;transform:scaleX(1.126)">n</i><i style="left:316.3px;width:10.0px;transform:scaleX(1.126)">d</i><i style="left:332.3px;width:10.0px;transform:scaleX(1.126)">e</i><i style="left:342.3px;width:10.0px;transform:scaleX(1.229)">x</i><i style="left:352.3px;width:9.0px;transform:scaleX(1.127)">c</i><i style="left:361.2px;width:10.0px;transform:scaleX(1.126)">e</i><i style="left:371.2px;width:10.0px;transform:scaleX(1.126)">p</i><i style="left:381.2px;width:6.0px;transform:scaleX(1.300)">t</i><i style="left:387.2px;width:5.0px;transform:scaleX(1.300)">i</i><i style="left:392.1px;width:10.0px;transform:scaleX(1.126)">o</i><i style="left:402.1px;width:10.0px;transform:scaleX(1.126)">n</i><i style="left:412.1px;width:9.0px;transform:scaleX(1.127)">s</i><i style="left:427.0px;width:6.0px;transform:scaleX(1.300)">t</i><i style="left:433.0px;width:10.0px;transform:scaleX(1.126)">o</i><i style="left:449.0px;width:11.0px;transform:scaleX(1.049)">S</i><i style="left:460.0px;width:10.0px;transform:scaleX(1.126)">e</i><i style="left:469.9px;width:10.0px;transform:scaleX(1.126)">n</i><i style="left:479.9px;width:6.0px;transform:scaleX(1.300)">t</i><i style="left:485.9px;width:7.0px;transform:scaleX(1.282)">r</i><i style="left:492.9px;width:10.0px;transform:scaleX(1.229)">y</i><i style="left:502.8px;width:6.0px;transform:scaleX(1.300)">,</i><i style="left:514.8px;width:11.0px;transform:scaleX(1.049)">B</i><i style="left:525.8px;width:10.0px;transform:scaleX(1.126)">u</i><i style="left:535.8px;width:10.0px;transform:scaleX(1.126)">g</i><i style="left:545.7px;width:9.0px;transform:scaleX(1.127)">s</i><i style="left:554.7px;width:10.0px;transform:scaleX(1.126)">n</i><i style="left:564.7px;width:10.0px;transform:scaleX(1.126)">a</i><i style="left:574.6px;width:10.0px;transform:scaleX(1.126)">g</i><i style="left:584.6px;width:6.0px;transform:scaleX(1.300)">,</i><i style="left:596.6px;width:10.0px;transform:scaleX(1.126)">e</i><i style="left:606.6px;width:6.0px;transform:scaleX(1.300)">t</i><i style="left:612.5px;width:9.0px;transform:scaleX(1.127)">c</i><i style="left:621.5px;width:6.0px;transform:scaleX(1.300)">.</i></div><div class="num" style="left:0;width:38px;top:450.3px;font-size:15.5px;line-height:18px">26</div><div class="ln" style="left:0;top:450.3px;font-size:15.5px;line-height:18px"><i style="left:84.0px;width:9.9px;transform:scaleX(1.300)">*</i></div><div class="num" style="left:0;width:38px;top:468.3px;font-size:15.5px;line-height:18px">27</div><div class="ln" style="left:0;top:468.3px;font-size:15.5px;line-height:18px"><i style="left:83.9px;width:9.8px;transform:scaleX(1.300)">*</i><i style="left:99.7px;width:15.7px;transform:scaleX(1.001)">@</i><i style="left:115.4px;width:9.8px;transform:scaleX(1.113)">p</i><i style="left:125.2px;width:9.8px;transform:scaleX(1.113)">a</i><i style="left:135.1px;width:6.9px;transform:scaleX(1.268)">r</i><i style="left:142.0px;width:9.8px;transform:scaleX(1.113)">a</i><i style="left:151.8px;width:15.7px;transform:scaleX(1.176)">m</i><i style="left:179.4px;width:6.9px;transform:scaleX(1.300)">\</i><i style="left:186.3px;width:9.8px;transform:scaleX(0.962)">E</i><i style="left:196.1px;width:9.8px;transform:scaleX(1.216)">x</i><i style="left:206.0px;width:8.9px;transform:scaleX(1.114)">c</i><i style="left:214.8px;width:9.8px;transform:scaleX(1.113)">e</i><i style="left:224.7px;width:9.8px;transform:scaleX(1.113)">p</i><i style="left:234.5px;width:5.9px;transform:scaleX(1.297)">t</i><i style="left:240.4px;width:4.9px;transform:scaleX(1.300)">i</i><i style="left:245.3px;width:9.8px;transform:scaleX(1.113)">o</i><i style="left:255.2px;width:9.8px;transform:scaleX(1.113)">n</i><i style="left:276.8px;width:9.8px;transform:scaleX(1.113)">$</i><i style="left:286.7px;width:9.8px;transform:scaleX(1.113)">e</i></div><div class="num" style="left:0;width:38px;top:486.3px;font-size:15.5px;line-height:18px">28</div><div class="ln" style="left:0;top:486.3px;font-size:15.5px;line-height:18px"><i style="left:83.9px;width:9.8px;transform:scaleX(1.300)">*</i><i style="left:99.6px;width:15.7px;transform:scaleX(0.998)">@</i><i style="left:115.3px;width:6.9px;transform:scaleX(1.264)">r</i><i style="left:122.1px;width:9.8px;transform:scaleX(1.110)">e</i><i style="left:131.9px;width:5.9px;transform:scaleX(1.293)">t</i><i style="left:137.8px;width:9.8px;transform:scaleX(1.110)">u</i><i style="left:147.6px;width:6.9px;transform:scaleX(1.264)">r</i><i style="left:154.5px;width:9.8px;transform:scaleX(1.110)">n</i><i style="left:170.2px;width:9.8px;transform:scaleX(1.212)">v</i><i style="left:180.0px;width:9.8px;transform:scaleX(1.110)">o</i><i style="left:189.8px;width:4.9px;transform:scaleX(1.300)">i</i><i style="left:194.7px;width:9.8px;transform:scaleX(1.110)">d</i></div><div class="num" style="left:0;width:38px;top:504.3px;font-size:15.5px;line-height:18px">29</div><div class="ln" style="left:0;top:504.3px;font-size:15.5px;line-height:18px"><i style="left:84.0px;width:9.9px;transform:scaleX(1.300)">*</i><i style="left:93.9px;width:7.0px;transform:scaleX(1.300)">/</i></div><div class="num" style="left:0;width:38px;top:522.3px;font-size:15.5px;line-height:18px">30</div><div class="ln" style="left:0;top:522.3px;font-size:15.5px;line-height:18px"><i style="left:78.0px;width:9.9px;transform:scaleX(1.115)">p</i><i style="left:87.9px;width:9.9px;transform:scaleX(1.115)">u</i><i style="left:97.7px;width:9.9px;transform:scaleX(1.115)">b</i><i style="left:107.6px;width:4.9px;transform:scaleX(1.300)">l</i><i style="left:112.5px;width:4.9px;transform:scaleX(1.300)">i</i><i style="left:117.4px;width:8.9px;transform:scaleX(1.116)">c</i><i style="left:132.2px;width:5.9px;transform:scaleX(1.299)">f</i><i style="left:138.2px;width:9.9px;transform:scaleX(1.115)">u</i><i style="left:148.0px;width:9.9px;transform:scaleX(1.115)">n</i><i style="left:157.9px;width:8.9px;transform:scaleX(1.116)">c</i><i style="left:166.8px;width:5.9px;transform:scaleX(1.299)">t</i><i style="left:172.7px;width:4.9px;transform:scaleX(1.300)">i</i><i style="left:177.6px;width:9.9px;transform:scaleX(1.115)">o</i><i style="left:187.5px;width:9.9px;transform:scaleX(1.115)">n</i><i style="left:203.2px;width:6.9px;transform:scaleX(1.270)">r</i><i style="left:210.2px;width:9.9px;transform:scaleX(1.115)">e</i><i style="left:220.0px;width:9.9px;transform:scaleX(1.115)">p</i><i style="left:229.9px;width:9.9px;transform:scaleX(1.115)">o</i><i style="left:239.7px;width:6.9px;transform:scaleX(1.270)">r</i><i style="left:246.6px;width:5.9px;transform:scaleX(1.299)">t</i><i style="left:252.6px;width:6.9px;transform:scaleX(1.270)">(</i><i style="left:259.5px;width:9.9px;transform:scaleX(0.963)">E</i><i style="left:269.3px;width:9.9px;transform:scaleX(1.218)">x</i><i style="left:279.2px;width:8.9px;transform:scaleX(1.116)">c</i><i style="left:288.1px;width:9.9px;transform:scaleX(1.115)">e</i><i style="left:297.9px;width:9.9px;transform:scaleX(1.115)">p</i><i style="left:307.8px;width:5.9px;transform:scaleX(1.299)">t</i><i style="left:313.7px;width:4.9px;transform:scaleX(1.300)">i</i><i style="left:318.6px;width:9.9px;transform:scaleX(1.115)">o</i><i style="left:328.5px;width:9.9px;transform:scaleX(1.115)">n</i><i style="left:344.3px;width:9.9px;transform:scaleX(1.115)">$</i><i style="left:354.1px;width:9.9px;transform:scaleX(1.115)">e</i><i style="left:364.0px;width:6.9px;transform:scaleX(1.270)">)</i></div><div class="num" style="left:0;width:38px;top:540.3px;font-size:15.5px;line-height:18px">31</div><div class="ln" style="left:0;top:540.3px;font-size:15.5px;line-height:18px"><i style="left:78.0px;width:9.9px;transform:scaleX(1.300)">{</i></div><div class="num" style="left:0;width:38px;top:558.3px;font-size:15.5px;line-height:18px">32</div><div class="ln" style="left:0;top:558.3px;font-size:15.5px;line-height:18px"><i style="left:102.0px;width:9.8px;transform:scaleX(1.112)">p</i><i style="left:111.8px;width:9.8px;transform:scaleX(1.112)">a</i><i style="left:121.6px;width:6.9px;transform:scaleX(1.266)">r</i><i style="left:128.5px;width:9.8px;transform:scaleX(1.112)">e</i><i style="left:138.3px;width:9.8px;transform:scaleX(1.112)">n</i><i style="left:148.2px;width:5.9px;transform:scaleX(1.295)">t</i><i style="left:154.1px;width:6.9px;transform:scaleX(1.300)">:</i><i style="left:160.9px;width:6.9px;transform:scaleX(1.300)">:</i><i style="left:167.8px;width:6.9px;transform:scaleX(1.266)">r</i><i style="left:174.7px;width:9.8px;transform:scaleX(1.112)">e</i><i style="left:184.5px;width:9.8px;transform:scaleX(1.112)">p</i><i style="left:194.3px;width:9.8px;transform:scaleX(1.112)">o</i><i style="left:204.2px;width:6.9px;transform:scaleX(1.266)">r</i><i style="left:211.0px;width:5.9px;transform:scaleX(1.295)">t</i><i style="left:216.9px;width:6.9px;transform:scaleX(1.266)">(</i><i style="left:223.8px;width:9.8px;transform:scaleX(1.112)">$</i><i style="left:233.6px;width:9.8px;transform:scaleX(1.112)">e</i><i style="left:243.4px;width:6.9px;transform:scaleX(1.266)">)</i><i style="left:250.3px;width:6.9px;transform:scaleX(1.300)">;</i></div><div class="num" style="left:0;width:38px;top:576.3px;font-size:15.5px;line-height:18px">33</div><div class="ln" style="left:0;top:576.3px;font-size:15.5px;line-height:18px"><i style="left:78.0px;width:9.9px;transform:scaleX(1.300)">}</i></div><div class="num" style="left:0;width:38px;top:594.3px;font-size:15.5px;line-height:18px">34</div><div class="ln" style="left:0;top:594.3px;font-size:15.5px;line-height:18px"><i style="left:78.0px;width:7.0px;transform:scaleX(1.300)">/</i><i style="left:85.0px;width:9.9px;transform:scaleX(1.300)">*</i><i style="left:94.9px;width:9.9px;transform:scaleX(1.300)">*</i></div><div class="num" style="left:0;width:38px;top:612.3px;font-size:15.5px;line-height:18px">35</div><div class="ln" style="left:0;top:612.3px;font-size:15.5px;line-height:18px"><i style="left:84.0px;width:9.9px;transform:scaleX(1.300)">*</i><i style="left:99.8px;width:10.9px;transform:scaleX(0.980)">R</i><i style="left:110.7px;width:9.9px;transform:scaleX(1.120)">e</i><i style="left:120.6px;width:9.9px;transform:scaleX(1.120)">n</i><i style="left:130.6px;width:9.9px;transform:scaleX(1.120)">d</i><i style="left:140.5px;width:9.9px;transform:scaleX(1.120)">e</i><i style="left:150.4px;width:6.9px;transform:scaleX(1.276)">r</i><i style="left:163.3px;width:9.9px;transform:scaleX(1.120)">a</i><i style="left:173.2px;width:9.9px;transform:scaleX(1.120)">n</i><i style="left:189.1px;width:9.9px;transform:scaleX(1.120)">e</i><i style="left:199.0px;width:9.9px;transform:scaleX(1.224)">x</i><i style="left:208.9px;width:8.9px;transform:scaleX(1.121)">c</i><i style="left:217.8px;width:9.9px;transform:scaleX(1.120)">e</i><i style="left:227.8px;width:9.9px;transform:scaleX(1.120)">p</i><i style="left:237.7px;width:6.0px;transform:scaleX(1.300)">t</i><i style="left:243.6px;width:5.0px;transform:scaleX(1.300)">i</i><i style="left:248.6px;width:9.9px;transform:scaleX(1.120)">o</i><i style="left:258.5px;width:9.9px;transform:scaleX(1.120)">n</i><i style="left:274.4px;width:5.0px;transform:scaleX(1.300)">i</i><i style="left:279.3px;width:9.9px;transform:scaleX(1.120)">n</i><i style="left:289.3px;width:6.0px;transform:scaleX(1.300)">t</i><i style="left:295.2px;width:9.9px;transform:scaleX(1.120)">o</i><i style="left:311.1px;width:9.9px;transform:scaleX(1.120)">a</i><i style="left:321.0px;width:9.9px;transform:scaleX(1.120)">n</i><i style="left:336.9px;width:11.9px;transform:scaleX(1.051)">H</i><i style="left:348.8px;width:9.9px;transform:scaleX(1.038)">T</i><i style="left:358.7px;width:9.9px;transform:scaleX(1.038)">T</i><i style="left:368.6px;width:9.9px;transform:scaleX(0.967)">P</i><i style="left:384.5px;width:6.9px;transform:scaleX(1.276)">r</i><i style="left:391.4px;width:9.9px;transform:scaleX(1.120)">e</i><i style="left:401.3px;width:8.9px;transform:scaleX(1.121)">s</i><i style="left:410.3px;width:9.9px;transform:scaleX(1.120)">p</i><i style="left:420.2px;width:9.9px;transform:scaleX(1.120)">o</i><i style="left:430.1px;width:9.9px;transform:scaleX(1.120)">n</i><i style="left:440.0px;width:8.9px;transform:scaleX(1.121)">s</i><i style="left:448.9px;width:9.9px;transform:scaleX(1.120)">e</i><i style="left:458.8px;width:6.0px;transform:scaleX(1.300)">.</i></div><div class="num" style="left:0;width:38px;top:630.3px;font-size:15.5px;line-height:18px">36</div><div class="ln" style="left:0;top:630.3px;font-size:15.5px;line-height:18px"><i style="left:84.0px;width:9.9px;transform:scaleX(1.300)">*</i></div><div class="num" style="left:0;width:38px;top:648.3px;font-size:15.5px;line-height:18px">37</div><div class="ln" style="left:0;top:648.3px;font-size:15.5px;line-height:18px"><i style="left:84.0px;width:10.0px;transform:scaleX(1.300)">*</i><i style="left:100.1px;width:16.0px;transform:scaleX(1.016)">@</i><i style="left:116.1px;width:10.0px;transform:scaleX(1.131)">p</i><i style="left:126.1px;width:10.0px;transform:scaleX(1.131)">a</i><i style="left:136.2px;width:7.0px;transform:scaleX(1.288)">r</i><i style="left:143.2px;width:10.0px;transform:scaleX(1.131)">a</i><i style="left:153.2px;width:16.0px;transform:scaleX(1.194)">m</i><i style="left:181.3px;width:7.0px;transform:scaleX(1.300)">\</i><i style="left:188.3px;width:7.0px;transform:scaleX(1.300)">I</i><i style="left:195.3px;width:5.0px;transform:scaleX(1.300)">l</i><i style="left:200.3px;width:5.0px;transform:scaleX(1.300)">l</i><i style="left:205.4px;width:10.0px;transform:scaleX(1.131)">u</i><i style="left:215.4px;width:16.0px;transform:scaleX(1.194)">m</i><i style="left:231.4px;width:5.0px;transform:scaleX(1.300)">i</i><i style="left:236.4px;width:10.0px;transform:scaleX(1.131)">n</i><i style="left:246.5px;width:10.0px;transform:scaleX(1.131)">a</i><i style="left:256.5px;width:6.0px;transform:scaleX(1.300)">t</i><i style="left:262.5px;width:10.0px;transform:scaleX(1.131)">e</i><i style="left:272.5px;width:7.0px;transform:scaleX(1.300)">\</i><i style="left:279.6px;width:12.0px;transform:scaleX(1.060)">H</i><i style="left:291.6px;width:6.0px;transform:scaleX(1.300)">t</i><i style="left:297.6px;width:6.0px;transform:scaleX(1.300)">t</i><i style="left:303.6px;width:10.0px;transform:scaleX(1.131)">p</i><i style="left:313.7px;width:7.0px;transform:scaleX(1.300)">\</i><i style="left:320.7px;width:11.0px;transform:scaleX(0.988)">R</i><i style="left:331.7px;width:10.0px;transform:scaleX(1.131)">e</i><i style="left:341.7px;width:10.0px;transform:scaleX(1.131)">q</i><i style="left:351.8px;width:10.0px;transform:scaleX(1.131)">u</i><i style="left:361.8px;width:10.0px;transform:scaleX(1.131)">e</i><i style="left:371.8px;width:9.0px;transform:scaleX(1.132)">s</i><i style="left:380.8px;width:6.0px;transform:scaleX(1.300)">t</i><i style="left:398.9px;width:10.0px;transform:scaleX(1.131)">$</i><i style="left:408.9px;width:7.0px;transform:scaleX(1.288)">r</i><i style="left:415.9px;width:10.0px;transform:scaleX(1.131)">e</i><i style="left:426.0px;width:10.0px;transform:scaleX(1.131)">q</i><i style="left:436.0px;width:10.0px;transform:scaleX(1.131)">u</i><i style="left:446.0px;width:10.0px;transform:scaleX(1.131)">e</i><i style="left:456.1px;width:9.0px;transform:scaleX(1.132)">s</i><i style="left:465.1px;width:6.0px;transform:scaleX(1.300)">t</i></div><div class="num" style="left:0;width:38px;top:666.3px;font-size:15.5px;line-height:18px">38</div><div class="ln" style="left:0;top:666.3px;font-size:15.5px;line-height:18px"><i style="left:83.9px;width:9.8px;transform:scaleX(1.300)">*</i><i style="left:99.7px;width:15.7px;transform:scaleX(1.001)">@</i><i style="left:115.4px;width:9.8px;transform:scaleX(1.113)">p</i><i style="left:125.2px;width:9.8px;transform:scaleX(1.113)">a</i><i style="left:135.1px;width:6.9px;transform:scaleX(1.268)">r</i><i style="left:142.0px;width:9.8px;transform:scaleX(1.113)">a</i><i style="left:151.8px;width:15.7px;transform:scaleX(1.176)">m</i><i style="left:179.4px;width:6.9px;transform:scaleX(1.300)">\</i><i style="left:186.3px;width:9.8px;transform:scaleX(0.962)">E</i><i style="left:196.1px;width:9.8px;transform:scaleX(1.216)">x</i><i style="left:206.0px;width:8.9px;transform:scaleX(1.114)">c</i><i style="left:214.8px;width:9.8px;transform:scaleX(1.113)">e</i><i style="left:224.7px;width:9.8px;transform:scaleX(1.113)">p</i><i style="left:234.5px;width:5.9px;transform:scaleX(1.297)">t</i><i style="left:240.4px;width:4.9px;transform:scaleX(1.300)">i</i><i style="left:245.3px;width:9.8px;transform:scaleX(1.113)">o</i><i style="left:255.2px;width:9.8px;transform:scaleX(1.113)">n</i><i style="left:276.8px;width:9.8px;transform:scaleX(1.113)">$</i><i style="left:286.7px;width:9.8px;transform:scaleX(1.113)">e</i></div><div class="num" style="left:0;width:38px;top:684.3px;font-size:15.5px;line-height:18px">39</div><div class="ln" style="left:0;top:684.3px;font-size:15.5px;line-height:18px"><i style="left:84.0px;width:10.0px;transform:scaleX(1.300)">*</i><i style="left:100.1px;width:16.0px;transform:scaleX(1.016)">@</i><i style="left:116.1px;width:7.0px;transform:scaleX(1.288)">r</i><i style="left:123.1px;width:10.0px;transform:scaleX(1.131)">e</i><i style="left:133.2px;width:6.0px;transform:scaleX(1.300)">t</i><i style="left:139.2px;width:10.0px;transform:scaleX(1.131)">u</i><i style="left:149.2px;width:7.0px;transform:scaleX(1.288)">r</i><i style="left:156.2px;width:10.0px;transform:scaleX(1.131)">n</i><i style="left:172.3px;width:7.0px;transform:scaleX(1.300)">\</i><i style="left:179.3px;width:7.0px;transform:scaleX(1.300)">I</i><i style="left:186.3px;width:5.0px;transform:scaleX(1.300)">l</i><i style="left:191.3px;width:5.0px;transform:scaleX(1.300)">l</i><i style="left:196.3px;width:10.0px;transform:scaleX(1.131)">u</i><i style="left:206.4px;width:16.0px;transform:scaleX(1.194)">m</i><i style="left:222.4px;width:5.0px;transform:scaleX(1.300)">i</i><i style="left:227.4px;width:10.0px;transform:scaleX(1.131)">n</i><i style="left:237.5px;width:10.0px;transform:scaleX(1.131)">a</i><i style="left:247.5px;width:6.0px;transform:scaleX(1.300)">t</i><i style="left:253.5px;width:10.0px;transform:scaleX(1.131)">e</i><i style="left:263.5px;width:7.0px;transform:scaleX(1.300)">\</i><i style="left:270.6px;width:12.0px;transform:scaleX(1.060)">H</i><i style="left:282.6px;width:6.0px;transform:scaleX(1.300)">t</i><i style="left:288.6px;width:6.0px;transform:scaleX(1.300)">t</i><i style="left:294.6px;width:10.0px;transform:scaleX(1.131)">p</i><i style="left:304.7px;width:7.0px;transform:scaleX(1.300)">\</i><i style="left:311.7px;width:11.0px;transform:scaleX(0.988)">R</i><i style="left:322.7px;width:10.0px;transform:scaleX(1.131)">e</i><i style="left:332.7px;width:9.0px;transform:scaleX(1.132)">s</i><i style="left:341.8px;width:10.0px;transform:scaleX(1.131)">p</i><i style="left:351.8px;width:10.0px;transform:scaleX(1.131)">o</i><i style="left:361.8px;width:10.0px;transform:scaleX(1.131)">n</i><i style="left:371.8px;width:9.0px;transform:scaleX(1.132)">s</i><i style="left:380.9px;width:10.0px;transform:scaleX(1.131)">e</i></div><div class="num" style="left:0;width:38px;top:702.3px;font-size:15.5px;line-height:18px">40</div><div class="ln" style="left:0;top:702.3px;font-size:15.5px;line-height:18px"><i style="left:84.0px;width:9.9px;transform:scaleX(1.300)">*</i><i style="left:93.9px;width:7.0px;transform:scaleX(1.300)">/</i></div><div class="num" style="left:0;width:38px;top:720.3px;font-size:15.5px;line-height:18px">41</div><div class="ln" style="left:0;top:720.3px;font-size:15.5px;line-height:18px"><i style="left:78.0px;width:9.9px;transform:scaleX(1.117)">p</i><i style="left:87.9px;width:9.9px;transform:scaleX(1.117)">u</i><i style="left:97.8px;width:9.9px;transform:scaleX(1.117)">b</i><i style="left:107.6px;width:4.9px;transform:scaleX(1.300)">l</i><i style="left:112.6px;width:4.9px;transform:scaleX(1.300)">i</i><i style="left:117.5px;width:8.9px;transform:scaleX(1.118)">c</i><i style="left:132.3px;width:5.9px;transform:scaleX(1.300)">f</i><i style="left:138.3px;width:9.9px;transform:scaleX(1.117)">u</i><i style="left:148.2px;width:9.9px;transform:scaleX(1.117)">n</i><i style="left:158.0px;width:8.9px;transform:scaleX(1.118)">c</i><i style="left:166.9px;width:5.9px;transform:scaleX(1.300)">t</i><i style="left:172.9px;width:4.9px;transform:scaleX(1.300)">i</i><i style="left:177.8px;width:9.9px;transform:scaleX(1.117)">o</i><i style="left:187.7px;width:9.9px;transform:scaleX(1.117)">n</i><i style="left:203.5px;width:6.9px;transform:scaleX(1.272)">r</i><i style="left:210.4px;width:9.9px;transform:scaleX(1.117)">e</i><i style="left:220.3px;width:9.9px;transform:scaleX(1.117)">n</i><i style="left:230.2px;width:9.9px;transform:scaleX(1.117)">d</i><i style="left:240.0px;width:9.9px;transform:scaleX(1.117)">e</i><i style="left:249.9px;width:6.9px;transform:scaleX(1.272)">r</i><i style="left:256.8px;width:6.9px;transform:scaleX(1.272)">(</i><i style="left:263.8px;width:9.9px;transform:scaleX(1.117)">$</i><i style="left:273.6px;width:6.9px;transform:scaleX(1.272)">r</i><i style="left:280.6px;width:9.9px;transform:scaleX(1.117)">e</i><i style="left:290.4px;width:9.9px;transform:scaleX(1.117)">q</i><i style="left:300.3px;width:9.9px;transform:scaleX(1.117)">u</i><i style="left:310.2px;width:9.9px;transform:scaleX(1.117)">e</i><i style="left:320.1px;width:8.9px;transform:scaleX(1.118)">s</i><i style="left:329.0px;width:5.9px;transform:scaleX(1.300)">t</i><i style="left:334.9px;width:5.9px;transform:scaleX(1.300)">,</i><i style="left:346.8px;width:9.9px;transform:scaleX(0.965)">E</i><i style="left:356.6px;width:9.9px;transform:scaleX(1.220)">x</i><i style="left:366.5px;width:8.9px;transform:scaleX(1.118)">c</i><i style="left:375.4px;width:9.9px;transform:scaleX(1.117)">e</i><i style="left:385.3px;width:9.9px;transform:scaleX(1.117)">p</i><i style="left:395.2px;width:5.9px;transform:scaleX(1.300)">t</i><i style="left:401.1px;width:4.9px;transform:scaleX(1.300)">i</i><i style="left:406.0px;width:9.9px;transform:scaleX(1.117)">o</i><i style="left:415.9px;width:9.9px;transform:scaleX(1.117)">n</i><i style="left:431.7px;width:9.9px;transform:scaleX(1.117)">$</i><i style="left:441.6px;width:9.9px;transform:scaleX(1.117)">e</i><i style="left:451.5px;width:6.9px;transform:scaleX(1.272)">)</i></div><div class="num" style="left:0;width:38px;top:738.3px;font-size:15.5px;line-height:18px">42</div><div class="ln" style="left:0;top:738.3px;font-size:15.5px;line-height:18px"><i style="left:78.0px;width:9.9px;transform:scaleX(1.300)">{</i></div><div class="num" style="left:0;width:38px;top:756.3px;font-size:15.5px;line-height:18px">43</div><div class="ln" style="left:0;top:756.3px;font-size:15.5px;line-height:18px"><i style="left:102.0px;width:6.9px;transform:scaleX(1.270)">r</i><i style="left:108.9px;width:9.9px;transform:scaleX(1.115)">e</i><i style="left:118.8px;width:5.9px;transform:scaleX(1.299)">t</i><i style="left:124.7px;width:9.9px;transform:scaleX(1.115)">u</i><i style="left:134.5px;width:6.9px;transform:scaleX(1.270)">r</i><i style="left:141.4px;width:9.9px;transform:scaleX(1.115)">n</i><i style="left:157.2px;width:9.9px;transform:scaleX(1.115)">p</i><i style="left:167.1px;width:9.9px;transform:scaleX(1.115)">a</i><i style="left:176.9px;width:6.9px;transform:scaleX(1.270)">r</i><i style="left:183.8px;width:9.9px;transform:scaleX(1.115)">e</i><i style="left:193.7px;width:9.9px;transform:scaleX(1.115)">n</i><i style="left:203.6px;width:5.9px;transform:scaleX(1.299)">t</i><i style="left:209.5px;width:6.9px;transform:scaleX(1.300)">:</i><i style="left:216.4px;width:6.9px;transform:scaleX(1.300)">:</i><i style="left:223.3px;width:6.9px;transform:scaleX(1.270)">r</i><i style="left:230.2px;width:9.9px;transform:scaleX(1.115)">e</i><i style="left:240.1px;width:9.9px;transform:scaleX(1.115)">n</i><i style="left:249.9px;width:9.9px;transform:scaleX(1.115)">d</i><i style="left:259.8px;width:9.9px;transform:scaleX(1.115)">e</i><i style="left:269.6px;width:6.9px;transform:scaleX(1.270)">r</i><i style="left:276.5px;width:6.9px;transform:scaleX(1.270)">(</i><i style="left:283.4px;width:9.9px;transform:scaleX(1.115)">$</i><i style="left:293.3px;width:6.9px;transform:scaleX(1.270)">r</i><i style="left:300.2px;width:9.9px;transform:scaleX(1.115)">e</i><i style="left:310.1px;width:9.9px;transform:scaleX(1.115)">q</i><i style="left:319.9px;width:9.9px;transform:scaleX(1.115)">u</i><i style="left:329.8px;width:9.9px;transform:scaleX(1.115)">e</i><i style="left:339.6px;width:8.9px;transform:scaleX(1.116)">s</i><i style="left:348.5px;width:5.9px;transform:scaleX(1.299)">t</i><i style="left:354.4px;width:5.9px;transform:scaleX(1.299)">,</i><i style="left:366.3px;width:9.9px;transform:scaleX(1.115)">$</i><i style="left:376.1px;width:9.9px;transform:scaleX(1.115)">e</i><i style="left:386.0px;width:6.9px;transform:scaleX(1.270)">)</i><i style="left:392.9px;width:6.9px;transform:scaleX(1.300)">;</i></div><div class="num" style="left:0;width:38px;top:774.3px;font-size:15.5px;line-height:18px">44</div><div class="ln" style="left:0;top:774.3px;font-size:15.5px;line-height:18px"><i style="left:78.0px;width:9.9px;transform:scaleX(1.300)">}</i></div></div><div class="a" style="left:1507px;top:91px;width:19px;height:782px;background:#f0f0f0"></div><div class="a" style="left:1508px;top:108px;width:16px;height:714px;background:#cdcdcd"></div><svg class="a" style="left:1512px;top:97px" width="8" height="7" viewBox="0 0 8 7"><path d="M0.8 5.6 L4 2 L7.2 5.6" fill="none" stroke="#4a4a4a" stroke-width="2"/></svg><svg class="a" style="left:1512px;top:861px" width="8" height="7" viewBox="0 0 8 7"><path d="M0.8 1.4 L4 5 L7.2 1.4" fill="none" stroke="#4a4a4a" stroke-width="2"/></svg><div class="a" style="left:0;top:873px;width:1519px;height:22px;background:#f0f0f0"></div><div class="a" style="left:0;top:875px;width:1519px;height:2px;background:#6f6f6f"></div><div class="a" style="left:0;top:877px;width:1519px;height:18px;background:#f0f0f0"></div><div class="ssep" style="left:787px"></div><div class="ssep" style="left:987px"></div><div class="ssep" style="left:1247px"></div><div class="ssep" style="left:1357px"></div><div class="ssep" style="left:1477px"></div><div class="ssep" style="left:1507px"></div><div class="st" style="left:3px">Normal text file</div><div class="st" style="left:792px">length : 1270</div><div class="st" style="left:871px">lines : 45</div><div class="st" style="left:992px">Ln : 16</div><div class="st" style="left:1037px">Col : 30</div><div class="st" style="left:1087px">Sel : 0 | 0</div><div class="st" style="left:1252px">Dos\Windows</div><div class="st" style="left:1362px">UTF-8</div><div class="st" style="left:1482px">INS</div></body></html>
